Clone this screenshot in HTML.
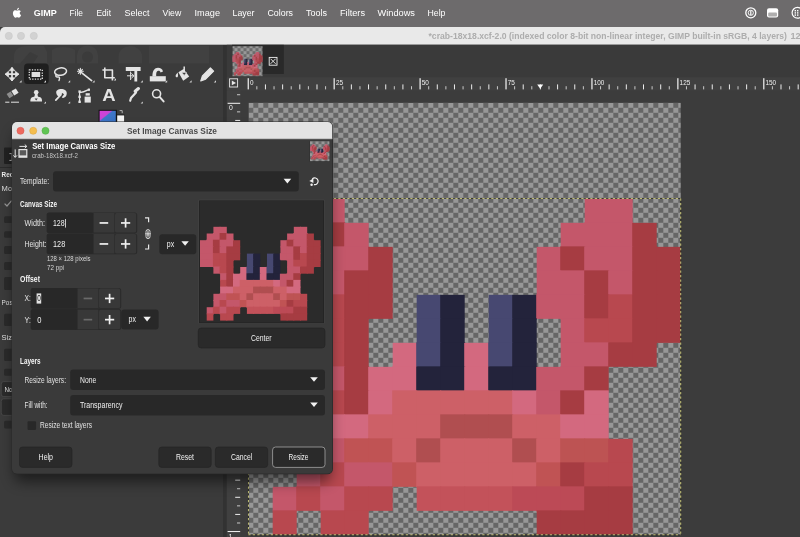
<!DOCTYPE html>
<html lang="en"><head><meta charset="utf-8"><title>GIMP – Set Image Canvas Size</title>
<style>html,body{margin:0;padding:0;background:#3c3c3c;overflow:hidden}svg{display:block;will-change:transform}text{font-family:'Liberation Sans', sans-serif;white-space:pre}</style>
</head><body>
<svg width="800" height="537" viewBox="0 0 800 537" font-family="Liberation Sans, sans-serif">
<defs>
<pattern id="chk" x="248.3" y="102.8" width="10" height="10" patternUnits="userSpaceOnUse">
<rect width="10" height="10" fill="#666666"/><rect width="5" height="5" fill="#979797"/><rect x="5" y="5" width="5" height="5" fill="#979797"/>
</pattern>
<pattern id="chks" x="0.5" y="0.2" width="6" height="6" patternUnits="userSpaceOnUse">
<rect width="6" height="6" fill="#6c6c6c"/><rect width="3" height="3" fill="#989898"/><rect x="3" y="3" width="3" height="3" fill="#989898"/>
</pattern>
<linearGradient id="fg" x1="0" y1="0" x2="1" y2="1"><stop offset="0" stop-color="#d63fdc"/><stop offset="0.36" stop-color="#c845d6"/><stop offset="0.42" stop-color="#3f77c9"/><stop offset="1" stop-color="#356fc2"/></linearGradient>
<filter id="sh" x="-20%" y="-20%" width="140%" height="150%"><feGaussianBlur stdDeviation="7"/></filter>
<clipPath id="dlgclip"><rect x="12" y="122" width="320.5" height="351.8" rx="5"/></clipPath>
</defs>
<rect x="0.00" y="0.00" width="800.00" height="537.00" fill="#3c3c3c"/>
<rect x="0.00" y="44.50" width="226.00" height="492.50" fill="#3b3b3b"/>
<rect x="223.00" y="44.50" width="4.20" height="492.50" fill="#323232"/>
<rect x="0.00" y="0.00" width="800.00" height="27.00" fill="#6d6b6c"/>
<g fill="#ffffff" transform="translate(12,6.4) scale(0.0122)"><path d="M634 546c-1-104 85-154 89-157-49-71-124-81-151-82-64-7-125 38-157 38-33 0-83-37-136-36-70 1-134 41-170 103-73 126-19 312 52 414 35 50 76 106 130 104 52-2 72-34 135-34s81 34 136 33c56-1 92-51 126-101 40-58 56-114 57-117-1-1-110-42-111-165zM531 240c29-35 48-83 43-131-41 2-92 28-121 62-26 30-50 80-43 126 46 4 93-23 121-57z"/></g>
<text x="33.75" y="16.20" font-size="9.2" fill="#ffffff" font-weight="700" textLength="23.00" lengthAdjust="spacingAndGlyphs">GIMP</text>
<text x="69.50" y="16.20" font-size="9.2" fill="#ffffff" textLength="13.50" lengthAdjust="spacingAndGlyphs">File</text>
<text x="96.50" y="16.20" font-size="9.2" fill="#ffffff" textLength="14.50" lengthAdjust="spacingAndGlyphs">Edit</text>
<text x="124.50" y="16.20" font-size="9.2" fill="#ffffff" textLength="25.00" lengthAdjust="spacingAndGlyphs">Select</text>
<text x="162.50" y="16.20" font-size="9.2" fill="#ffffff" textLength="18.75" lengthAdjust="spacingAndGlyphs">View</text>
<text x="194.50" y="16.20" font-size="9.2" fill="#ffffff" textLength="25.50" lengthAdjust="spacingAndGlyphs">Image</text>
<text x="232.50" y="16.20" font-size="9.2" fill="#ffffff" textLength="22.00" lengthAdjust="spacingAndGlyphs">Layer</text>
<text x="267.50" y="16.20" font-size="9.2" fill="#ffffff" textLength="25.50" lengthAdjust="spacingAndGlyphs">Colors</text>
<text x="306.00" y="16.20" font-size="9.2" fill="#ffffff" textLength="21.00" lengthAdjust="spacingAndGlyphs">Tools</text>
<text x="340.00" y="16.20" font-size="9.2" fill="#ffffff" textLength="25.00" lengthAdjust="spacingAndGlyphs">Filters</text>
<text x="377.50" y="16.20" font-size="9.2" fill="#ffffff" textLength="37.50" lengthAdjust="spacingAndGlyphs">Windows</text>
<text x="427.50" y="16.20" font-size="9.2" fill="#ffffff" textLength="18.00" lengthAdjust="spacingAndGlyphs">Help</text>
<g fill="none" stroke="#ffffff" stroke-width="1.3"><circle cx="750.8" cy="12.8" r="5"/><circle cx="750.8" cy="12.8" r="2.6" stroke-width="0.9"/></g>
<rect x="750.20" y="10.60" width="1.20" height="4.40" fill="#ffffff"/>
<rect x="767" y="8.2" width="11.2" height="9.4" rx="2" fill="#ffffff"/><rect x="768.2" y="12.4" width="8.8" height="4" rx="1" fill="#6d6b6c" opacity="0.55"/>
<g fill="none" stroke="#ffffff" stroke-width="1.2"><circle cx="797.5" cy="12.8" r="5.4"/></g>
<g fill="#ffffff"><rect x="794.6" y="10" width="1.4" height="1.4"/><rect x="797" y="10" width="1.4" height="1.4"/><rect x="794.6" y="12.2" width="1.4" height="1.4"/><rect x="797" y="12.2" width="1.4" height="1.4"/><rect x="794.6" y="14.4" width="1.4" height="1.4"/><rect x="797" y="14.4" width="1.4" height="1.4"/></g>
<path d="M0 44.5V32a5 5 0 0 1 5-5H800V44.5Z" fill="#e9e9e9"/>
<rect x="0.00" y="44.20" width="800.00" height="0.60" fill="#c8c8c8"/>
<circle cx="8.8" cy="35.9" r="3.6" fill="#d2d2d2" stroke="#c6c6c6" stroke-width="0.5"/>
<circle cx="21.0" cy="35.9" r="3.6" fill="#d2d2d2" stroke="#c6c6c6" stroke-width="0.5"/>
<circle cx="33.8" cy="35.9" r="3.6" fill="#d2d2d2" stroke="#c6c6c6" stroke-width="0.5"/>
<text x="428.50" y="39.30" font-size="9.2" fill="#adadad" font-weight="700" textLength="358.50" lengthAdjust="spacingAndGlyphs">*crab-18x18.xcf-2.0 (indexed color 8-bit non-linear integer, GIMP built-in sRGB, 4 layers)</text>
<text x="790.50" y="39.30" font-size="9.2" fill="#adadad" font-weight="700">128x128 – GIMP</text>
<g fill="#414141"><path d="M14 63.5V56C14 49 20 46 27 46H44L47 52V63.5Z"/><path d="M52 63.5V50C56 46 70 46 75 50V63.5Z"/><path d="M77 63.5V55A10.5 9.5 0 0 1 98 55V63.5Z"/><path d="M118.6 63.5V56A11.7 10 0 0 1 142 56V63.5Z"/><rect x="149" y="45.8" width="60" height="17.7"/></g>
<ellipse cx="87.5" cy="57" rx="5.5" ry="5.5" fill="#3b3b3b"/><path d="M20 63.5L30 52L38 56L33 63.5Z" fill="#3b3b3b"/>
<rect x="24.10" y="63.60" width="24.60" height="20.30" fill="#1f1f1f" rx="3.5"/>
<g fill="none" stroke="#e4e4e4" stroke-width="1.5" stroke-linecap="round" stroke-linejoin="round">
<path d="M12 68.2V80.2M6 74.2H18" stroke-width="1.7"/>
<path d="M9.4 70.4L12 67.4L14.6 70.4ZM9.4 78L12 81L14.6 78ZM8.2 71.6L5.2 74.2L8.2 76.8ZM15.8 71.6L18.8 74.2L15.8 76.8Z" fill="#e4e4e4" stroke-width="0.8"/>
<rect x="29.3" y="69.8" width="13" height="9.4" stroke-width="1.3" stroke-dasharray="1.3 1.3" stroke-linecap="butt"/>
<ellipse cx="60.6" cy="71.6" rx="6" ry="3.7" transform="rotate(-8 60.6 71.6)" stroke-width="1.5"/>
<path d="M56.6 74.4c-1.6 1.2-.6 3 1.4 2.6c1.6-.3 2 .8 1 3.6" stroke-width="1.4"/>
<path d="M82.4 73.4L91.6 80.6" stroke-width="1.7"/>
<path d="M80.4 68.4V74.2M77.5 71.3H83.3M78.4 69.3L82.4 73.3M82.4 69.3L78.4 73.3" stroke-width="1.1"/>
<path d="M104.8 67.6V77.8H114.8M102.4 70H112.4V80.4" stroke-width="1.6" stroke-linecap="butt"/>
<path d="M200.8 81L202.4 76L210.4 68L213.6 71.2L205.6 79.2Z" fill="#e4e4e4" stroke-width="1.2"/>
<circle cx="156.6" cy="93.8" r="4" stroke-width="1.6"/><path d="M159.6 96.9L163.6 101.4" stroke-width="2"/>
<path d="M130.2 100.8L131 98L136 92.4" stroke-width="2.2"/><path d="M135.2 91.2L138.4 88.6" stroke-width="3.2"/>
<path d="M5.6 102.2H9M11.4 102.2H18.6" stroke-width="1"/>
<path d="M79.6 92V102M79.6 92.6C84 92.2 86.6 90.6 89 89.4" stroke-width="1.2"/>
</g>
<g fill="#e4e4e4">
<rect x="31.60" y="72.00" width="8.60" height="5.00" fill="#e0e0e0"/>
<path d="M11.4 91L15.8 88.6L18.6 92.8L14.2 95.4Z"/><path d="M10.6 91.6L13.4 95.8L9.4 98.2L6.6 94Z" fill="#8d8d8d"/>
<circle cx="36.2" cy="92.2" r="2.3"/><path d="M35 93.6H37.4L38 97H34.4Z"/><path d="M30.4 100.6C30.4 97.4 33 96.6 36.2 96.6S42 97.4 42 100.6V101.6H30.4Z"/>
<path d="M34.6 98.6H37.8L36.2 100.6Z" fill="#3b3b3b"/>
<path d="M56.2 92.6C56 89.4 60 88.4 63.4 89.2C66.6 90 67.6 93 66.2 95.8C65 98 62.4 98.6 61.8 97.2L64 94.4L62.6 93L58.8 96.6C57.4 96 56.4 94.6 56.2 92.6Z"/><path d="M61 94.6L55.8 100.2" stroke="#e4e4e4" stroke-width="1.7" stroke-linecap="round"/>
<rect x="78.40" y="90.40" width="2.40" height="2.40" fill="#e4e4e4"/>
<rect x="78.40" y="95.60" width="2.40" height="2.40" fill="#e4e4e4"/>
<rect x="78.40" y="100.60" width="2.40" height="2.40" fill="#e4e4e4"/>
<rect x="87.80" y="88.60" width="2.20" height="2.20" fill="#e4e4e4"/>
<path d="M84.6 96.6H90.8V102.6H84.6Z"/><path d="M85.6 93.2H89.8V95.6H85.6Z"/>
<path d="M125.8 67H140.6V71H137.2V81.4H134.4V71H125.8Z"/>
<path d="M127 75.8H133.6M131.4 73.4L134 75.8L131.4 78.2M130.6 71.6V80" fill="none" stroke="#e4e4e4" stroke-width="1"/>
<path d="M149.8 76.2H165.8V81.4H149.8Z"/><path d="M152.4 76.4C152.4 70.6 154.6 67.8 158 67.8C160.6 67.8 162.4 69.2 163 71.4L160.6 72.4C160.2 71.2 159.4 70.6 158.2 70.8C156.6 71 156 73 156.2 76.4Z"/>
<path d="M178.4 72.2L183.6 69L189.2 76.4L183.2 80.8Z"/><path d="M177.6 72.6L175.8 75C175.2 76.6 176.4 77.8 177.4 77.2C178.2 76.6 178.2 74.6 177.6 72.6Z"/>
<path d="M184.2 66.6V73.4" fill="none" stroke="#e4e4e4" stroke-width="1.5"/><path d="M181.8 72.4L184.2 75.4L186.6 72.4Z" fill="#3b3b3b" stroke="#e4e4e4" stroke-width="0.6"/>
<path d="M21.6 80.2V82.4H19.400000000000002Z" fill="#d8d8d8"/>
<path d="M46 80.2V82.4H43.8Z" fill="#d8d8d8"/>
<path d="M70.2 80.2V82.4H68.0Z" fill="#d8d8d8"/>
<path d="M94.6 80.2V82.4H92.39999999999999Z" fill="#d8d8d8"/>
<path d="M116 78.2V80.4H113.8Z" fill="#d8d8d8"/>
<path d="M142.8 80.2V82.4H140.60000000000002Z" fill="#d8d8d8"/>
<path d="M167.2 80.2V82.4H165.0Z" fill="#d8d8d8"/>
<path d="M191.6 80.2V82.4H189.4Z" fill="#d8d8d8"/>
<path d="M216 80.2V82.4H213.8Z" fill="#d8d8d8"/>
<path d="M46 101.39999999999999V103.6H43.8Z" fill="#d8d8d8"/>
<path d="M70.2 101.39999999999999V103.6H68.0Z" fill="#d8d8d8"/>
<path d="M142.8 101.39999999999999V103.6H140.60000000000002Z" fill="#d8d8d8"/>
</g>
<text x="102.20" y="101.00" font-size="17.2" fill="#e4e4e4" font-weight="700" textLength="13.40" lengthAdjust="spacingAndGlyphs">A</text>
<rect x="116.40" y="114.60" width="8.40" height="9.00" fill="#1a1a1a"/>
<rect x="117.20" y="115.40" width="7.00" height="8.00" fill="#f4f4f4"/>
<rect x="98.60" y="109.80" width="18.20" height="14.00" fill="#101010"/>
<rect x="99.60" y="110.80" width="16.20" height="13.00" fill="url(#fg)"/>
<path d="M119.6 110.6H122.2V113.2" fill="none" stroke="#cfcfcf" stroke-width="0.8"/>
<rect x="4.00" y="147.50" width="9.00" height="16.50" fill="#222222" rx="1"/>
<path d="M9.4 153.6H12V160.4H9.4" fill="none" stroke="#d8d8d8" stroke-width="0.8"/>
<rect x="0.00" y="167.00" width="14.00" height="0.80" fill="#2a2a2a"/>
<text x="1.60" y="177.00" font-size="7.6" fill="#f2f2f2" font-weight="700" textLength="51.00" lengthAdjust="spacingAndGlyphs">Rectangle Select</text>
<text x="1.60" y="190.80" font-size="7.6" fill="#e0e0e0" textLength="21.00" lengthAdjust="spacingAndGlyphs">Mode:</text>
<path d="M4.6 203.6L7 206L11.6 200.6" fill="none" stroke="#9a9a9a" stroke-width="1.2"/>
<rect x="4.00" y="216.25" width="9.00" height="6.75" fill="#2b2b2b" rx="1.5"/>
<rect x="4.00" y="231.25" width="9.00" height="6.50" fill="#2b2b2b" rx="1.5"/>
<rect x="4.00" y="246.00" width="9.00" height="8.00" fill="#2b2b2b" rx="1.5"/>
<rect x="4.00" y="262.00" width="9.00" height="8.00" fill="#2b2b2b" rx="1.5"/>
<rect x="4.00" y="277.00" width="9.00" height="13.00" fill="#2b2b2b" rx="1.5"/>
<rect x="4.00" y="313.75" width="9.00" height="12.25" fill="#2b2b2b" rx="1.5"/>
<rect x="4.00" y="348.75" width="9.00" height="12.25" fill="#2b2b2b" rx="1.5"/>
<rect x="4.00" y="368.75" width="9.00" height="7.00" fill="#2b2b2b" rx="1.5"/>
<rect x="4.00" y="420.70" width="9.00" height="7.70" fill="#2b2b2b" rx="1.5"/>
<text x="1.60" y="305.00" font-size="7.6" fill="#e0e0e0" textLength="24.50" lengthAdjust="spacingAndGlyphs">Position:</text>
<text x="1.60" y="340.00" font-size="7.6" fill="#e0e0e0" textLength="16.90" lengthAdjust="spacingAndGlyphs">Size:</text>
<rect x="1.20" y="381.60" width="14.00" height="15.00" fill="#2b2b2b" rx="2.5" stroke="#4c4c4c" stroke-width="0.8"/>
<text x="4.40" y="392.00" font-size="7.6" fill="#e6e6e6" textLength="15.00" lengthAdjust="spacingAndGlyphs">None</text>
<rect x="1.20" y="398.80" width="14.00" height="16.60" fill="#2b2b2b" rx="2.5" stroke="#4c4c4c" stroke-width="0.8"/>
<rect x="226.80" y="44.80" width="573.20" height="32.40" fill="#3a3a3a"/>
<rect x="232.00" y="44.80" width="51.80" height="29.20" fill="#292929"/>
<rect x="232.50" y="46.20" width="30.00" height="30.00" fill="url(#chks)"/>
<g opacity="0.93">
<rect x="235.83" y="52.10" width="1.97" height="1.97" fill="#c4576a"/>
<rect x="237.20" y="52.10" width="1.97" height="1.97" fill="#c4576a"/>
<rect x="255.84" y="52.10" width="1.97" height="1.97" fill="#c4576a"/>
<rect x="257.20" y="52.10" width="1.97" height="1.97" fill="#c4576a"/>
<rect x="234.17" y="53.77" width="1.97" height="1.97" fill="#c4576a"/>
<rect x="235.53" y="53.47" width="2.27" height="2.27" fill="#c4576a"/>
<rect x="237.20" y="53.47" width="2.27" height="2.27" fill="#a63c42"/>
<rect x="238.87" y="53.77" width="1.97" height="1.97" fill="#c4576a"/>
<rect x="254.17" y="53.77" width="1.97" height="1.97" fill="#c4576a"/>
<rect x="255.54" y="53.47" width="2.27" height="2.27" fill="#c4576a"/>
<rect x="257.20" y="53.47" width="2.27" height="2.27" fill="#c4576a"/>
<rect x="258.87" y="53.77" width="1.97" height="1.97" fill="#a63c42"/>
<rect x="232.50" y="55.43" width="1.97" height="1.97" fill="#c4576a"/>
<rect x="233.87" y="55.13" width="2.27" height="2.27" fill="#c4576a"/>
<rect x="235.53" y="55.13" width="2.27" height="2.27" fill="#a63c42"/>
<rect x="237.20" y="55.13" width="2.27" height="2.27" fill="#c4576a"/>
<rect x="238.87" y="55.13" width="2.27" height="2.27" fill="#c4576a"/>
<rect x="240.53" y="55.43" width="1.97" height="1.97" fill="#a63c42"/>
<rect x="252.50" y="55.43" width="1.97" height="1.97" fill="#c4576a"/>
<rect x="253.87" y="55.13" width="2.27" height="2.27" fill="#a63c42"/>
<rect x="255.54" y="55.13" width="2.27" height="2.27" fill="#c4576a"/>
<rect x="257.20" y="55.13" width="2.27" height="2.27" fill="#c4576a"/>
<rect x="258.87" y="55.13" width="2.27" height="2.27" fill="#a63c42"/>
<rect x="260.54" y="55.43" width="1.97" height="1.97" fill="#a63c42"/>
<rect x="232.50" y="56.80" width="1.97" height="2.27" fill="#c4576a"/>
<rect x="233.87" y="56.80" width="2.27" height="2.27" fill="#c4576a"/>
<rect x="235.53" y="56.80" width="2.27" height="2.27" fill="#a63c42"/>
<rect x="237.20" y="56.80" width="2.27" height="2.27" fill="#c4576a"/>
<rect x="238.87" y="56.80" width="2.27" height="2.27" fill="#a63c42"/>
<rect x="240.53" y="56.80" width="1.97" height="2.27" fill="#a63c42"/>
<rect x="252.50" y="56.80" width="1.97" height="2.27" fill="#c4576a"/>
<rect x="253.87" y="56.80" width="2.27" height="2.27" fill="#c4576a"/>
<rect x="255.54" y="56.80" width="2.27" height="2.27" fill="#a63c42"/>
<rect x="257.20" y="56.80" width="2.27" height="2.27" fill="#c4576a"/>
<rect x="258.87" y="56.80" width="2.27" height="2.27" fill="#a63c42"/>
<rect x="260.54" y="56.80" width="1.97" height="2.27" fill="#a63c42"/>
<rect x="232.50" y="58.47" width="1.97" height="2.27" fill="#c4576a"/>
<rect x="233.87" y="58.47" width="2.27" height="2.27" fill="#c4576a"/>
<rect x="235.53" y="58.47" width="2.27" height="2.27" fill="#b8484f"/>
<rect x="237.20" y="58.47" width="2.27" height="2.27" fill="#b8484f"/>
<rect x="238.87" y="58.47" width="2.27" height="2.27" fill="#a63c42"/>
<rect x="240.53" y="58.47" width="1.97" height="1.97" fill="#a63c42"/>
<rect x="244.17" y="58.77" width="1.97" height="1.97" fill="#474871"/>
<rect x="245.54" y="58.77" width="1.97" height="1.97" fill="#23233b"/>
<rect x="249.17" y="58.77" width="1.97" height="1.97" fill="#474871"/>
<rect x="250.54" y="58.77" width="2.27" height="1.97" fill="#23233b"/>
<rect x="252.20" y="58.47" width="2.27" height="1.97" fill="#c4576a"/>
<rect x="253.87" y="58.47" width="2.27" height="2.27" fill="#c4576a"/>
<rect x="255.54" y="58.47" width="2.27" height="2.27" fill="#a63c42"/>
<rect x="257.20" y="58.47" width="2.27" height="2.27" fill="#b8484f"/>
<rect x="258.87" y="58.47" width="2.27" height="2.27" fill="#a63c42"/>
<rect x="260.54" y="58.47" width="1.97" height="2.27" fill="#a63c42"/>
<rect x="232.50" y="60.14" width="1.97" height="1.97" fill="#c4576a"/>
<rect x="233.87" y="60.14" width="2.27" height="1.97" fill="#c4576a"/>
<rect x="235.53" y="60.14" width="2.27" height="2.27" fill="#b8484f"/>
<rect x="237.20" y="60.14" width="2.27" height="2.27" fill="#b8484f"/>
<rect x="238.87" y="60.14" width="1.97" height="2.27" fill="#a63c42"/>
<rect x="244.17" y="60.14" width="1.97" height="2.27" fill="#474871"/>
<rect x="245.54" y="60.14" width="1.97" height="2.27" fill="#23233b"/>
<rect x="249.17" y="60.14" width="1.97" height="2.27" fill="#474871"/>
<rect x="250.54" y="60.14" width="1.97" height="2.27" fill="#23233b"/>
<rect x="254.17" y="60.14" width="1.97" height="2.27" fill="#c4576a"/>
<rect x="255.54" y="60.14" width="2.27" height="2.27" fill="#b8484f"/>
<rect x="257.20" y="60.14" width="2.27" height="2.27" fill="#b8484f"/>
<rect x="258.87" y="60.14" width="2.27" height="2.27" fill="#a63c42"/>
<rect x="260.54" y="60.14" width="1.97" height="1.97" fill="#a63c42"/>
<rect x="235.83" y="61.80" width="1.97" height="1.97" fill="#c4576a"/>
<rect x="237.20" y="61.80" width="2.27" height="2.27" fill="#b8484f"/>
<rect x="238.87" y="61.80" width="1.97" height="2.27" fill="#a63c42"/>
<rect x="242.50" y="62.10" width="1.97" height="1.97" fill="#d3697f"/>
<rect x="243.87" y="61.80" width="2.27" height="2.27" fill="#474871"/>
<rect x="245.54" y="61.80" width="2.27" height="2.27" fill="#23233b"/>
<rect x="247.20" y="62.10" width="2.27" height="1.97" fill="#d3697f"/>
<rect x="248.87" y="61.80" width="2.27" height="2.27" fill="#474871"/>
<rect x="250.54" y="61.80" width="1.97" height="2.27" fill="#23233b"/>
<rect x="254.17" y="61.80" width="1.97" height="2.27" fill="#c4576a"/>
<rect x="255.54" y="61.80" width="2.27" height="2.27" fill="#c4576a"/>
<rect x="257.20" y="61.80" width="2.27" height="1.97" fill="#a63c42"/>
<rect x="258.87" y="61.80" width="1.97" height="1.97" fill="#a63c42"/>
<rect x="237.50" y="63.47" width="1.97" height="2.27" fill="#c4576a"/>
<rect x="238.87" y="63.47" width="2.27" height="2.27" fill="#a63c42"/>
<rect x="240.53" y="63.77" width="2.27" height="1.97" fill="#d3697f"/>
<rect x="242.20" y="63.47" width="2.27" height="2.27" fill="#d3697f"/>
<rect x="243.87" y="63.47" width="2.27" height="2.27" fill="#23233b"/>
<rect x="245.54" y="63.47" width="2.27" height="2.27" fill="#23233b"/>
<rect x="247.20" y="63.47" width="2.27" height="2.27" fill="#d3697f"/>
<rect x="248.87" y="63.47" width="2.27" height="2.27" fill="#23233b"/>
<rect x="250.54" y="63.47" width="2.27" height="2.27" fill="#23233b"/>
<rect x="252.20" y="63.77" width="2.27" height="1.97" fill="#c4576a"/>
<rect x="253.87" y="63.47" width="2.27" height="2.27" fill="#c4576a"/>
<rect x="255.54" y="63.47" width="1.97" height="2.27" fill="#a63c42"/>
<rect x="237.50" y="65.14" width="1.97" height="2.27" fill="#b8484f"/>
<rect x="238.87" y="65.14" width="2.27" height="2.27" fill="#a63c42"/>
<rect x="240.53" y="65.14" width="2.27" height="2.27" fill="#d3697f"/>
<rect x="242.20" y="65.14" width="2.27" height="2.27" fill="#cd6067"/>
<rect x="243.87" y="65.14" width="2.27" height="2.27" fill="#cd6067"/>
<rect x="245.54" y="65.14" width="2.27" height="2.27" fill="#cd6067"/>
<rect x="247.20" y="65.14" width="2.27" height="2.27" fill="#cd6067"/>
<rect x="248.87" y="65.14" width="2.27" height="2.27" fill="#cd6067"/>
<rect x="250.54" y="65.14" width="2.27" height="2.27" fill="#d3697f"/>
<rect x="252.20" y="65.14" width="2.27" height="2.27" fill="#c4576a"/>
<rect x="253.87" y="65.14" width="2.27" height="2.27" fill="#a63c42"/>
<rect x="255.54" y="65.14" width="1.97" height="2.27" fill="#d3697f"/>
<rect x="237.50" y="66.80" width="1.97" height="2.27" fill="#d3697f"/>
<rect x="238.87" y="66.80" width="2.27" height="2.27" fill="#d3697f"/>
<rect x="240.53" y="66.80" width="2.27" height="2.27" fill="#cd6067"/>
<rect x="242.20" y="66.80" width="2.27" height="2.27" fill="#cd6067"/>
<rect x="243.87" y="66.80" width="2.27" height="2.27" fill="#cd6067"/>
<rect x="245.54" y="66.80" width="2.27" height="2.27" fill="#b04e50"/>
<rect x="247.20" y="66.80" width="2.27" height="2.27" fill="#b04e50"/>
<rect x="248.87" y="66.80" width="2.27" height="2.27" fill="#b04e50"/>
<rect x="250.54" y="66.80" width="2.27" height="2.27" fill="#cd6067"/>
<rect x="252.20" y="66.80" width="2.27" height="2.27" fill="#cd6067"/>
<rect x="253.87" y="66.80" width="2.27" height="2.27" fill="#d3697f"/>
<rect x="255.54" y="66.80" width="1.97" height="2.27" fill="#d3697f"/>
<rect x="235.83" y="68.77" width="1.97" height="1.97" fill="#c4576a"/>
<rect x="237.20" y="68.47" width="2.27" height="2.27" fill="#c4576a"/>
<rect x="238.87" y="68.47" width="2.27" height="2.27" fill="#c05354"/>
<rect x="240.53" y="68.47" width="2.27" height="2.27" fill="#c05354"/>
<rect x="242.20" y="68.47" width="2.27" height="2.27" fill="#cd6067"/>
<rect x="243.87" y="68.47" width="2.27" height="2.27" fill="#b04e50"/>
<rect x="245.54" y="68.47" width="2.27" height="2.27" fill="#cd6067"/>
<rect x="247.20" y="68.47" width="2.27" height="2.27" fill="#cd6067"/>
<rect x="248.87" y="68.47" width="2.27" height="2.27" fill="#cd6067"/>
<rect x="250.54" y="68.47" width="2.27" height="2.27" fill="#b04e50"/>
<rect x="252.20" y="68.47" width="2.27" height="2.27" fill="#cd6067"/>
<rect x="253.87" y="68.47" width="2.27" height="2.27" fill="#bd5353"/>
<rect x="255.54" y="68.47" width="2.27" height="2.27" fill="#bd5353"/>
<rect x="257.20" y="68.77" width="1.97" height="1.97" fill="#b8484f"/>
<rect x="235.83" y="70.14" width="1.97" height="2.27" fill="#c4576a"/>
<rect x="237.20" y="70.14" width="2.27" height="2.27" fill="#b8484f"/>
<rect x="238.87" y="70.14" width="2.27" height="2.27" fill="#c4576a"/>
<rect x="240.53" y="70.14" width="2.27" height="2.27" fill="#c4576a"/>
<rect x="242.20" y="70.14" width="2.27" height="1.97" fill="#c05354"/>
<rect x="243.87" y="70.14" width="2.27" height="2.27" fill="#cd6067"/>
<rect x="245.54" y="70.14" width="2.27" height="2.27" fill="#cd6067"/>
<rect x="247.20" y="70.14" width="2.27" height="2.27" fill="#cd6067"/>
<rect x="248.87" y="70.14" width="2.27" height="2.27" fill="#cd6067"/>
<rect x="250.54" y="70.14" width="2.27" height="2.27" fill="#cd6067"/>
<rect x="252.20" y="70.14" width="2.27" height="2.27" fill="#c05354"/>
<rect x="253.87" y="70.14" width="2.27" height="2.27" fill="#a63c42"/>
<rect x="255.54" y="70.14" width="2.27" height="2.27" fill="#b8484f"/>
<rect x="257.20" y="70.14" width="1.97" height="2.27" fill="#b8484f"/>
<rect x="234.17" y="72.10" width="1.97" height="1.97" fill="#c4576a"/>
<rect x="235.53" y="71.80" width="2.27" height="1.97" fill="#b8484f"/>
<rect x="237.20" y="71.80" width="2.27" height="2.27" fill="#c4576a"/>
<rect x="238.87" y="71.80" width="2.27" height="2.27" fill="#b8484f"/>
<rect x="240.53" y="71.80" width="1.97" height="1.97" fill="#b8484f"/>
<rect x="244.17" y="71.80" width="1.97" height="1.97" fill="#c3525a"/>
<rect x="245.54" y="71.80" width="2.27" height="1.97" fill="#c3525a"/>
<rect x="247.20" y="71.80" width="2.27" height="1.97" fill="#c3525a"/>
<rect x="248.87" y="71.80" width="2.27" height="1.97" fill="#c3525a"/>
<rect x="250.54" y="71.80" width="2.27" height="1.97" fill="#bc4a56"/>
<rect x="252.20" y="71.80" width="2.27" height="2.27" fill="#bc4a56"/>
<rect x="253.87" y="71.80" width="2.27" height="2.27" fill="#bc4a56"/>
<rect x="255.54" y="71.80" width="2.27" height="2.27" fill="#a63c42"/>
<rect x="257.20" y="71.80" width="1.97" height="2.27" fill="#a63c42"/>
<rect x="234.17" y="73.47" width="1.67" height="1.97" fill="#b8484f"/>
<rect x="237.50" y="73.47" width="1.97" height="1.97" fill="#b8484f"/>
<rect x="238.87" y="73.47" width="1.97" height="1.97" fill="#b8484f"/>
<rect x="252.50" y="73.47" width="1.97" height="1.97" fill="#a63c42"/>
<rect x="253.87" y="73.47" width="2.27" height="1.97" fill="#a63c42"/>
<rect x="255.54" y="73.47" width="2.27" height="1.97" fill="#a63c42"/>
<rect x="257.20" y="73.47" width="1.97" height="1.97" fill="#a63c42"/>
</g>
<g fill="none" stroke="#f0f0f0" stroke-width="0.9"><rect x="269.2" y="57.4" width="7.8" height="7.8"/><path d="M270.6 58.8L275.6 63.8M275.6 58.8L270.6 63.8"/></g>
<rect x="226.80" y="77.20" width="573.20" height="13.00" fill="#404040"/>
<rect x="226.80" y="90.20" width="13.80" height="446.80" fill="#404040"/>
<rect x="229.6" y="78.8" width="8" height="8.2" fill="none" stroke="#e8e8e8" stroke-width="0.9"/><path d="M231.8 80.6L236 82.9L231.8 85.2Z" fill="#e8e8e8"/>
<g fill="#f0f0f0">
<rect x="247.65" y="78.20" width="1.20" height="11.20" fill="#f4f4f4"/>
<rect x="256.34" y="86.20" width="1.00" height="3.20" fill="#c8c8c8"/>
<rect x="264.94" y="84.40" width="1.00" height="5.00" fill="#ececec"/>
<rect x="273.53" y="86.20" width="1.00" height="3.20" fill="#c8c8c8"/>
<rect x="282.12" y="84.40" width="1.00" height="5.00" fill="#ececec"/>
<rect x="290.71" y="86.20" width="1.00" height="3.20" fill="#c8c8c8"/>
<rect x="299.31" y="84.40" width="1.00" height="5.00" fill="#ececec"/>
<rect x="307.90" y="86.20" width="1.00" height="3.20" fill="#c8c8c8"/>
<rect x="316.49" y="84.40" width="1.00" height="5.00" fill="#ececec"/>
<rect x="325.08" y="86.20" width="1.00" height="3.20" fill="#c8c8c8"/>
<rect x="333.57" y="78.20" width="1.20" height="11.20" fill="#f4f4f4"/>
<rect x="342.27" y="86.20" width="1.00" height="3.20" fill="#c8c8c8"/>
<rect x="350.86" y="84.40" width="1.00" height="5.00" fill="#ececec"/>
<rect x="359.45" y="86.20" width="1.00" height="3.20" fill="#c8c8c8"/>
<rect x="368.04" y="84.40" width="1.00" height="5.00" fill="#ececec"/>
<rect x="376.64" y="86.20" width="1.00" height="3.20" fill="#c8c8c8"/>
<rect x="385.23" y="84.40" width="1.00" height="5.00" fill="#ececec"/>
<rect x="393.82" y="86.20" width="1.00" height="3.20" fill="#c8c8c8"/>
<rect x="402.41" y="84.40" width="1.00" height="5.00" fill="#ececec"/>
<rect x="411.01" y="86.20" width="1.00" height="3.20" fill="#c8c8c8"/>
<rect x="419.50" y="78.20" width="1.20" height="11.20" fill="#f4f4f4"/>
<rect x="428.19" y="86.20" width="1.00" height="3.20" fill="#c8c8c8"/>
<rect x="436.78" y="84.40" width="1.00" height="5.00" fill="#ececec"/>
<rect x="445.38" y="86.20" width="1.00" height="3.20" fill="#c8c8c8"/>
<rect x="453.97" y="84.40" width="1.00" height="5.00" fill="#ececec"/>
<rect x="462.56" y="86.20" width="1.00" height="3.20" fill="#c8c8c8"/>
<rect x="471.15" y="84.40" width="1.00" height="5.00" fill="#ececec"/>
<rect x="479.75" y="86.20" width="1.00" height="3.20" fill="#c8c8c8"/>
<rect x="488.34" y="84.40" width="1.00" height="5.00" fill="#ececec"/>
<rect x="496.93" y="86.20" width="1.00" height="3.20" fill="#c8c8c8"/>
<rect x="505.42" y="78.20" width="1.20" height="11.20" fill="#f4f4f4"/>
<rect x="514.12" y="86.20" width="1.00" height="3.20" fill="#c8c8c8"/>
<rect x="522.71" y="84.40" width="1.00" height="5.00" fill="#ececec"/>
<rect x="531.30" y="86.20" width="1.00" height="3.20" fill="#c8c8c8"/>
<rect x="539.89" y="84.40" width="1.00" height="5.00" fill="#ececec"/>
<rect x="548.49" y="86.20" width="1.00" height="3.20" fill="#c8c8c8"/>
<rect x="557.08" y="84.40" width="1.00" height="5.00" fill="#ececec"/>
<rect x="565.67" y="86.20" width="1.00" height="3.20" fill="#c8c8c8"/>
<rect x="574.26" y="84.40" width="1.00" height="5.00" fill="#ececec"/>
<rect x="582.86" y="86.20" width="1.00" height="3.20" fill="#c8c8c8"/>
<rect x="591.35" y="78.20" width="1.20" height="11.20" fill="#f4f4f4"/>
<rect x="600.04" y="86.20" width="1.00" height="3.20" fill="#c8c8c8"/>
<rect x="608.63" y="84.40" width="1.00" height="5.00" fill="#ececec"/>
<rect x="617.23" y="86.20" width="1.00" height="3.20" fill="#c8c8c8"/>
<rect x="625.82" y="84.40" width="1.00" height="5.00" fill="#ececec"/>
<rect x="634.41" y="86.20" width="1.00" height="3.20" fill="#c8c8c8"/>
<rect x="643.00" y="84.40" width="1.00" height="5.00" fill="#ececec"/>
<rect x="651.60" y="86.20" width="1.00" height="3.20" fill="#c8c8c8"/>
<rect x="660.19" y="84.40" width="1.00" height="5.00" fill="#ececec"/>
<rect x="668.78" y="86.20" width="1.00" height="3.20" fill="#c8c8c8"/>
<rect x="677.27" y="78.20" width="1.20" height="11.20" fill="#f4f4f4"/>
<rect x="685.97" y="86.20" width="1.00" height="3.20" fill="#c8c8c8"/>
<rect x="694.56" y="84.40" width="1.00" height="5.00" fill="#ececec"/>
<rect x="703.15" y="86.20" width="1.00" height="3.20" fill="#c8c8c8"/>
<rect x="711.74" y="84.40" width="1.00" height="5.00" fill="#ececec"/>
<rect x="720.34" y="86.20" width="1.00" height="3.20" fill="#c8c8c8"/>
<rect x="728.93" y="84.40" width="1.00" height="5.00" fill="#ececec"/>
<rect x="737.52" y="86.20" width="1.00" height="3.20" fill="#c8c8c8"/>
<rect x="746.12" y="84.40" width="1.00" height="5.00" fill="#ececec"/>
<rect x="754.71" y="86.20" width="1.00" height="3.20" fill="#c8c8c8"/>
<rect x="763.20" y="78.20" width="1.20" height="11.20" fill="#f4f4f4"/>
<rect x="771.89" y="86.20" width="1.00" height="3.20" fill="#c8c8c8"/>
<rect x="780.49" y="84.40" width="1.00" height="5.00" fill="#ececec"/>
<rect x="789.08" y="86.20" width="1.00" height="3.20" fill="#c8c8c8"/>
<rect x="797.67" y="84.40" width="1.00" height="5.00" fill="#ececec"/>
</g>
<text x="249.95" y="85.00" font-size="7.8" fill="#f0f0f0" textLength="3.55" lengthAdjust="spacingAndGlyphs">0</text>
<text x="335.88" y="85.00" font-size="7.8" fill="#f0f0f0" textLength="7.10" lengthAdjust="spacingAndGlyphs">25</text>
<text x="421.80" y="85.00" font-size="7.8" fill="#f0f0f0" textLength="7.10" lengthAdjust="spacingAndGlyphs">50</text>
<text x="507.72" y="85.00" font-size="7.8" fill="#f0f0f0" textLength="7.10" lengthAdjust="spacingAndGlyphs">75</text>
<text x="593.65" y="85.00" font-size="7.8" fill="#f0f0f0" textLength="10.65" lengthAdjust="spacingAndGlyphs">100</text>
<text x="679.58" y="85.00" font-size="7.8" fill="#f0f0f0" textLength="10.65" lengthAdjust="spacingAndGlyphs">125</text>
<text x="765.50" y="85.00" font-size="7.8" fill="#f0f0f0" textLength="10.65" lengthAdjust="spacingAndGlyphs">150</text>
<path d="M537.2 84.6H543.2L540.2 88.8Z" fill="#ffffff"/>
<rect x="237.00" y="94.23" width="3.20" height="1.00" fill="#c8c8c8"/>
<rect x="227.60" y="102.80" width="12.60" height="1.00" fill="#f4f4f4"/>
<rect x="237.00" y="111.36" width="3.20" height="1.00" fill="#c8c8c8"/>
<rect x="235.20" y="119.93" width="5.00" height="1.00" fill="#ececec"/>
<rect x="237.00" y="128.50" width="3.20" height="1.00" fill="#c8c8c8"/>
<rect x="235.20" y="137.06" width="5.00" height="1.00" fill="#ececec"/>
<rect x="237.00" y="145.62" width="3.20" height="1.00" fill="#c8c8c8"/>
<rect x="235.20" y="154.19" width="5.00" height="1.00" fill="#ececec"/>
<rect x="237.00" y="162.75" width="3.20" height="1.00" fill="#c8c8c8"/>
<rect x="235.20" y="171.32" width="5.00" height="1.00" fill="#ececec"/>
<rect x="237.00" y="179.88" width="3.20" height="1.00" fill="#c8c8c8"/>
<rect x="227.60" y="188.45" width="12.60" height="1.00" fill="#f4f4f4"/>
<rect x="237.00" y="197.02" width="3.20" height="1.00" fill="#c8c8c8"/>
<rect x="235.20" y="205.58" width="5.00" height="1.00" fill="#ececec"/>
<rect x="237.00" y="214.15" width="3.20" height="1.00" fill="#c8c8c8"/>
<rect x="235.20" y="222.71" width="5.00" height="1.00" fill="#ececec"/>
<rect x="237.00" y="231.28" width="3.20" height="1.00" fill="#c8c8c8"/>
<rect x="235.20" y="239.84" width="5.00" height="1.00" fill="#ececec"/>
<rect x="237.00" y="248.41" width="3.20" height="1.00" fill="#c8c8c8"/>
<rect x="235.20" y="256.97" width="5.00" height="1.00" fill="#ececec"/>
<rect x="237.00" y="265.54" width="3.20" height="1.00" fill="#c8c8c8"/>
<rect x="227.60" y="274.10" width="12.60" height="1.00" fill="#f4f4f4"/>
<rect x="237.00" y="282.67" width="3.20" height="1.00" fill="#c8c8c8"/>
<rect x="235.20" y="291.23" width="5.00" height="1.00" fill="#ececec"/>
<rect x="237.00" y="299.80" width="3.20" height="1.00" fill="#c8c8c8"/>
<rect x="235.20" y="308.36" width="5.00" height="1.00" fill="#ececec"/>
<rect x="237.00" y="316.93" width="3.20" height="1.00" fill="#c8c8c8"/>
<rect x="235.20" y="325.49" width="5.00" height="1.00" fill="#ececec"/>
<rect x="237.00" y="334.06" width="3.20" height="1.00" fill="#c8c8c8"/>
<rect x="235.20" y="342.62" width="5.00" height="1.00" fill="#ececec"/>
<rect x="237.00" y="351.19" width="3.20" height="1.00" fill="#c8c8c8"/>
<rect x="227.60" y="359.75" width="12.60" height="1.00" fill="#f4f4f4"/>
<rect x="237.00" y="368.32" width="3.20" height="1.00" fill="#c8c8c8"/>
<rect x="235.20" y="376.88" width="5.00" height="1.00" fill="#ececec"/>
<rect x="237.00" y="385.45" width="3.20" height="1.00" fill="#c8c8c8"/>
<rect x="235.20" y="394.01" width="5.00" height="1.00" fill="#ececec"/>
<rect x="237.00" y="402.58" width="3.20" height="1.00" fill="#c8c8c8"/>
<rect x="235.20" y="411.14" width="5.00" height="1.00" fill="#ececec"/>
<rect x="237.00" y="419.71" width="3.20" height="1.00" fill="#c8c8c8"/>
<rect x="235.20" y="428.27" width="5.00" height="1.00" fill="#ececec"/>
<rect x="237.00" y="436.84" width="3.20" height="1.00" fill="#c8c8c8"/>
<rect x="227.60" y="445.40" width="12.60" height="1.00" fill="#f4f4f4"/>
<rect x="237.00" y="453.97" width="3.20" height="1.00" fill="#c8c8c8"/>
<rect x="235.20" y="462.53" width="5.00" height="1.00" fill="#ececec"/>
<rect x="237.00" y="471.10" width="3.20" height="1.00" fill="#c8c8c8"/>
<rect x="235.20" y="479.66" width="5.00" height="1.00" fill="#ececec"/>
<rect x="237.00" y="488.23" width="3.20" height="1.00" fill="#c8c8c8"/>
<rect x="235.20" y="496.79" width="5.00" height="1.00" fill="#ececec"/>
<rect x="237.00" y="505.36" width="3.20" height="1.00" fill="#c8c8c8"/>
<rect x="235.20" y="513.92" width="5.00" height="1.00" fill="#ececec"/>
<rect x="237.00" y="522.49" width="3.20" height="1.00" fill="#c8c8c8"/>
<rect x="227.60" y="531.05" width="12.60" height="1.00" fill="#f4f4f4"/>
<text x="228.90" y="109.80" font-size="6.8" fill="#f0f0f0" textLength="3.80" lengthAdjust="spacingAndGlyphs">0</text>
<text x="229.60" y="196.30" font-size="6.6" fill="#f0f0f0" textLength="3.60" lengthAdjust="spacingAndGlyphs">2</text>
<text x="229.60" y="202.40" font-size="6.6" fill="#f0f0f0" textLength="3.60" lengthAdjust="spacingAndGlyphs">5</text>
<text x="229.60" y="282.20" font-size="6.6" fill="#f0f0f0" textLength="3.60" lengthAdjust="spacingAndGlyphs">5</text>
<text x="229.60" y="288.30" font-size="6.6" fill="#f0f0f0" textLength="3.60" lengthAdjust="spacingAndGlyphs">0</text>
<text x="229.60" y="368.10" font-size="6.6" fill="#f0f0f0" textLength="3.60" lengthAdjust="spacingAndGlyphs">7</text>
<text x="229.60" y="374.20" font-size="6.6" fill="#f0f0f0" textLength="3.60" lengthAdjust="spacingAndGlyphs">5</text>
<text x="229.60" y="454.00" font-size="6.6" fill="#f0f0f0" textLength="3.60" lengthAdjust="spacingAndGlyphs">1</text>
<text x="229.60" y="460.10" font-size="6.6" fill="#f0f0f0" textLength="3.60" lengthAdjust="spacingAndGlyphs">0</text>
<text x="229.60" y="466.20" font-size="6.6" fill="#f0f0f0" textLength="3.60" lengthAdjust="spacingAndGlyphs">0</text>
<text x="228.80" y="538.80" font-size="6.8" fill="#f0f0f0" textLength="3.60" lengthAdjust="spacingAndGlyphs">1</text>
<rect x="248.70" y="102.85" width="432.00" height="432.00" fill="url(#chk)"/>
<rect x="296.70" y="198.85" width="24.50" height="24.50" fill="#c4576a"/>
<rect x="320.20" y="198.85" width="24.50" height="24.50" fill="#c4576a"/>
<rect x="584.70" y="198.85" width="24.50" height="24.50" fill="#c4576a"/>
<rect x="608.20" y="198.85" width="24.50" height="24.50" fill="#c4576a"/>
<rect x="272.70" y="222.85" width="24.50" height="24.50" fill="#c4576a"/>
<rect x="296.20" y="222.35" width="25.00" height="25.00" fill="#c4576a"/>
<rect x="320.20" y="222.35" width="25.00" height="25.00" fill="#a63c42"/>
<rect x="344.20" y="222.85" width="24.50" height="24.50" fill="#c4576a"/>
<rect x="560.70" y="222.85" width="24.50" height="24.50" fill="#c4576a"/>
<rect x="584.20" y="222.35" width="25.00" height="25.00" fill="#c4576a"/>
<rect x="608.20" y="222.35" width="25.00" height="25.00" fill="#c4576a"/>
<rect x="632.20" y="222.85" width="24.50" height="24.50" fill="#a63c42"/>
<rect x="248.70" y="246.85" width="24.50" height="24.50" fill="#c4576a"/>
<rect x="272.20" y="246.35" width="25.00" height="25.00" fill="#c4576a"/>
<rect x="296.20" y="246.35" width="25.00" height="25.00" fill="#a63c42"/>
<rect x="320.20" y="246.35" width="25.00" height="25.00" fill="#c4576a"/>
<rect x="344.20" y="246.35" width="25.00" height="25.00" fill="#c4576a"/>
<rect x="368.20" y="246.85" width="24.50" height="24.50" fill="#a63c42"/>
<rect x="536.70" y="246.85" width="24.50" height="24.50" fill="#c4576a"/>
<rect x="560.20" y="246.35" width="25.00" height="25.00" fill="#a63c42"/>
<rect x="584.20" y="246.35" width="25.00" height="25.00" fill="#c4576a"/>
<rect x="608.20" y="246.35" width="25.00" height="25.00" fill="#c4576a"/>
<rect x="632.20" y="246.35" width="25.00" height="25.00" fill="#a63c42"/>
<rect x="656.20" y="246.85" width="24.50" height="24.50" fill="#a63c42"/>
<rect x="248.70" y="270.35" width="24.50" height="25.00" fill="#c4576a"/>
<rect x="272.20" y="270.35" width="25.00" height="25.00" fill="#c4576a"/>
<rect x="296.20" y="270.35" width="25.00" height="25.00" fill="#a63c42"/>
<rect x="320.20" y="270.35" width="25.00" height="25.00" fill="#c4576a"/>
<rect x="344.20" y="270.35" width="25.00" height="25.00" fill="#a63c42"/>
<rect x="368.20" y="270.35" width="24.50" height="25.00" fill="#a63c42"/>
<rect x="536.70" y="270.35" width="24.50" height="25.00" fill="#c4576a"/>
<rect x="560.20" y="270.35" width="25.00" height="25.00" fill="#c4576a"/>
<rect x="584.20" y="270.35" width="25.00" height="25.00" fill="#a63c42"/>
<rect x="608.20" y="270.35" width="25.00" height="25.00" fill="#c4576a"/>
<rect x="632.20" y="270.35" width="25.00" height="25.00" fill="#a63c42"/>
<rect x="656.20" y="270.35" width="24.50" height="25.00" fill="#a63c42"/>
<rect x="248.70" y="294.35" width="24.50" height="25.00" fill="#c4576a"/>
<rect x="272.20" y="294.35" width="25.00" height="25.00" fill="#c4576a"/>
<rect x="296.20" y="294.35" width="25.00" height="25.00" fill="#b8484f"/>
<rect x="320.20" y="294.35" width="25.00" height="25.00" fill="#b8484f"/>
<rect x="344.20" y="294.35" width="25.00" height="25.00" fill="#a63c42"/>
<rect x="368.20" y="294.35" width="24.50" height="24.50" fill="#a63c42"/>
<rect x="416.70" y="294.85" width="24.50" height="24.50" fill="#474871"/>
<rect x="440.20" y="294.85" width="24.50" height="24.50" fill="#23233b"/>
<rect x="488.70" y="294.85" width="24.50" height="24.50" fill="#474871"/>
<rect x="512.20" y="294.85" width="25.00" height="24.50" fill="#23233b"/>
<rect x="536.20" y="294.35" width="25.00" height="24.50" fill="#c4576a"/>
<rect x="560.20" y="294.35" width="25.00" height="25.00" fill="#c4576a"/>
<rect x="584.20" y="294.35" width="25.00" height="25.00" fill="#a63c42"/>
<rect x="608.20" y="294.35" width="25.00" height="25.00" fill="#b8484f"/>
<rect x="632.20" y="294.35" width="25.00" height="25.00" fill="#a63c42"/>
<rect x="656.20" y="294.35" width="24.50" height="25.00" fill="#a63c42"/>
<rect x="248.70" y="318.35" width="24.50" height="24.50" fill="#c4576a"/>
<rect x="272.20" y="318.35" width="25.00" height="24.50" fill="#c4576a"/>
<rect x="296.20" y="318.35" width="25.00" height="25.00" fill="#b8484f"/>
<rect x="320.20" y="318.35" width="25.00" height="25.00" fill="#b8484f"/>
<rect x="344.20" y="318.35" width="24.50" height="25.00" fill="#a63c42"/>
<rect x="416.70" y="318.35" width="24.50" height="25.00" fill="#474871"/>
<rect x="440.20" y="318.35" width="24.50" height="25.00" fill="#23233b"/>
<rect x="488.70" y="318.35" width="24.50" height="25.00" fill="#474871"/>
<rect x="512.20" y="318.35" width="24.50" height="25.00" fill="#23233b"/>
<rect x="560.70" y="318.35" width="24.50" height="25.00" fill="#c4576a"/>
<rect x="584.20" y="318.35" width="25.00" height="25.00" fill="#b8484f"/>
<rect x="608.20" y="318.35" width="25.00" height="25.00" fill="#b8484f"/>
<rect x="632.20" y="318.35" width="25.00" height="25.00" fill="#a63c42"/>
<rect x="656.20" y="318.35" width="24.50" height="24.50" fill="#a63c42"/>
<rect x="296.70" y="342.35" width="24.50" height="24.50" fill="#c4576a"/>
<rect x="320.20" y="342.35" width="25.00" height="25.00" fill="#b8484f"/>
<rect x="344.20" y="342.35" width="24.50" height="25.00" fill="#a63c42"/>
<rect x="392.70" y="342.85" width="24.50" height="24.50" fill="#d3697f"/>
<rect x="416.20" y="342.35" width="25.00" height="25.00" fill="#474871"/>
<rect x="440.20" y="342.35" width="25.00" height="25.00" fill="#23233b"/>
<rect x="464.20" y="342.85" width="25.00" height="24.50" fill="#d3697f"/>
<rect x="488.20" y="342.35" width="25.00" height="25.00" fill="#474871"/>
<rect x="512.20" y="342.35" width="24.50" height="25.00" fill="#23233b"/>
<rect x="560.70" y="342.35" width="24.50" height="25.00" fill="#c4576a"/>
<rect x="584.20" y="342.35" width="25.00" height="25.00" fill="#c4576a"/>
<rect x="608.20" y="342.35" width="25.00" height="24.50" fill="#a63c42"/>
<rect x="632.20" y="342.35" width="24.50" height="24.50" fill="#a63c42"/>
<rect x="320.70" y="366.35" width="24.50" height="25.00" fill="#c4576a"/>
<rect x="344.20" y="366.35" width="25.00" height="25.00" fill="#a63c42"/>
<rect x="368.20" y="366.85" width="25.00" height="24.50" fill="#d3697f"/>
<rect x="392.20" y="366.35" width="25.00" height="25.00" fill="#d3697f"/>
<rect x="416.20" y="366.35" width="25.00" height="25.00" fill="#23233b"/>
<rect x="440.20" y="366.35" width="25.00" height="25.00" fill="#23233b"/>
<rect x="464.20" y="366.35" width="25.00" height="25.00" fill="#d3697f"/>
<rect x="488.20" y="366.35" width="25.00" height="25.00" fill="#23233b"/>
<rect x="512.20" y="366.35" width="25.00" height="25.00" fill="#23233b"/>
<rect x="536.20" y="366.85" width="25.00" height="24.50" fill="#c4576a"/>
<rect x="560.20" y="366.35" width="25.00" height="25.00" fill="#c4576a"/>
<rect x="584.20" y="366.35" width="24.50" height="25.00" fill="#a63c42"/>
<rect x="320.70" y="390.35" width="24.50" height="25.00" fill="#b8484f"/>
<rect x="344.20" y="390.35" width="25.00" height="25.00" fill="#a63c42"/>
<rect x="368.20" y="390.35" width="25.00" height="25.00" fill="#d3697f"/>
<rect x="392.20" y="390.35" width="25.00" height="25.00" fill="#cd6067"/>
<rect x="416.20" y="390.35" width="25.00" height="25.00" fill="#cd6067"/>
<rect x="440.20" y="390.35" width="25.00" height="25.00" fill="#cd6067"/>
<rect x="464.20" y="390.35" width="25.00" height="25.00" fill="#cd6067"/>
<rect x="488.20" y="390.35" width="25.00" height="25.00" fill="#cd6067"/>
<rect x="512.20" y="390.35" width="25.00" height="25.00" fill="#d3697f"/>
<rect x="536.20" y="390.35" width="25.00" height="25.00" fill="#c4576a"/>
<rect x="560.20" y="390.35" width="25.00" height="25.00" fill="#a63c42"/>
<rect x="584.20" y="390.35" width="24.50" height="25.00" fill="#d3697f"/>
<rect x="320.70" y="414.35" width="24.50" height="25.00" fill="#d3697f"/>
<rect x="344.20" y="414.35" width="25.00" height="25.00" fill="#d3697f"/>
<rect x="368.20" y="414.35" width="25.00" height="25.00" fill="#cd6067"/>
<rect x="392.20" y="414.35" width="25.00" height="25.00" fill="#cd6067"/>
<rect x="416.20" y="414.35" width="25.00" height="25.00" fill="#cd6067"/>
<rect x="440.20" y="414.35" width="25.00" height="25.00" fill="#b04e50"/>
<rect x="464.20" y="414.35" width="25.00" height="25.00" fill="#b04e50"/>
<rect x="488.20" y="414.35" width="25.00" height="25.00" fill="#b04e50"/>
<rect x="512.20" y="414.35" width="25.00" height="25.00" fill="#cd6067"/>
<rect x="536.20" y="414.35" width="25.00" height="25.00" fill="#cd6067"/>
<rect x="560.20" y="414.35" width="25.00" height="25.00" fill="#d3697f"/>
<rect x="584.20" y="414.35" width="24.50" height="25.00" fill="#d3697f"/>
<rect x="296.70" y="438.85" width="24.50" height="24.50" fill="#c4576a"/>
<rect x="320.20" y="438.35" width="25.00" height="25.00" fill="#c4576a"/>
<rect x="344.20" y="438.35" width="25.00" height="25.00" fill="#c05354"/>
<rect x="368.20" y="438.35" width="25.00" height="25.00" fill="#c05354"/>
<rect x="392.20" y="438.35" width="25.00" height="25.00" fill="#cd6067"/>
<rect x="416.20" y="438.35" width="25.00" height="25.00" fill="#b04e50"/>
<rect x="440.20" y="438.35" width="25.00" height="25.00" fill="#cd6067"/>
<rect x="464.20" y="438.35" width="25.00" height="25.00" fill="#cd6067"/>
<rect x="488.20" y="438.35" width="25.00" height="25.00" fill="#cd6067"/>
<rect x="512.20" y="438.35" width="25.00" height="25.00" fill="#b04e50"/>
<rect x="536.20" y="438.35" width="25.00" height="25.00" fill="#cd6067"/>
<rect x="560.20" y="438.35" width="25.00" height="25.00" fill="#bd5353"/>
<rect x="584.20" y="438.35" width="25.00" height="25.00" fill="#bd5353"/>
<rect x="608.20" y="438.85" width="24.50" height="24.50" fill="#b8484f"/>
<rect x="296.70" y="462.35" width="24.50" height="25.00" fill="#c4576a"/>
<rect x="320.20" y="462.35" width="25.00" height="25.00" fill="#b8484f"/>
<rect x="344.20" y="462.35" width="25.00" height="25.00" fill="#c4576a"/>
<rect x="368.20" y="462.35" width="25.00" height="25.00" fill="#c4576a"/>
<rect x="392.20" y="462.35" width="25.00" height="24.50" fill="#c05354"/>
<rect x="416.20" y="462.35" width="25.00" height="25.00" fill="#cd6067"/>
<rect x="440.20" y="462.35" width="25.00" height="25.00" fill="#cd6067"/>
<rect x="464.20" y="462.35" width="25.00" height="25.00" fill="#cd6067"/>
<rect x="488.20" y="462.35" width="25.00" height="25.00" fill="#cd6067"/>
<rect x="512.20" y="462.35" width="25.00" height="25.00" fill="#cd6067"/>
<rect x="536.20" y="462.35" width="25.00" height="25.00" fill="#c05354"/>
<rect x="560.20" y="462.35" width="25.00" height="25.00" fill="#a63c42"/>
<rect x="584.20" y="462.35" width="25.00" height="25.00" fill="#b8484f"/>
<rect x="608.20" y="462.35" width="24.50" height="25.00" fill="#b8484f"/>
<rect x="272.70" y="486.85" width="24.50" height="24.50" fill="#c4576a"/>
<rect x="296.20" y="486.35" width="25.00" height="24.50" fill="#b8484f"/>
<rect x="320.20" y="486.35" width="25.00" height="25.00" fill="#c4576a"/>
<rect x="344.20" y="486.35" width="25.00" height="25.00" fill="#b8484f"/>
<rect x="368.20" y="486.35" width="24.50" height="24.50" fill="#b8484f"/>
<rect x="416.70" y="486.35" width="24.50" height="24.50" fill="#c3525a"/>
<rect x="440.20" y="486.35" width="25.00" height="24.50" fill="#c3525a"/>
<rect x="464.20" y="486.35" width="25.00" height="24.50" fill="#c3525a"/>
<rect x="488.20" y="486.35" width="25.00" height="24.50" fill="#c3525a"/>
<rect x="512.20" y="486.35" width="25.00" height="24.50" fill="#bc4a56"/>
<rect x="536.20" y="486.35" width="25.00" height="25.00" fill="#bc4a56"/>
<rect x="560.20" y="486.35" width="25.00" height="25.00" fill="#bc4a56"/>
<rect x="584.20" y="486.35" width="25.00" height="25.00" fill="#a63c42"/>
<rect x="608.20" y="486.35" width="24.50" height="25.00" fill="#a63c42"/>
<rect x="272.70" y="510.35" width="24.00" height="24.50" fill="#b8484f"/>
<rect x="320.70" y="510.35" width="24.50" height="24.50" fill="#b8484f"/>
<rect x="344.20" y="510.35" width="24.50" height="24.50" fill="#b8484f"/>
<rect x="536.70" y="510.35" width="24.50" height="24.50" fill="#a63c42"/>
<rect x="560.20" y="510.35" width="25.00" height="24.50" fill="#a63c42"/>
<rect x="584.20" y="510.35" width="25.00" height="24.50" fill="#a63c42"/>
<rect x="608.20" y="510.35" width="24.50" height="24.50" fill="#a63c42"/>
<g fill="none" stroke-width="1.1">
<path d="M248.29999999999998 198.5H680.7M680.7 198.5V534.7M248.29999999999998 534.7H680.7M248.5 198.5V534.7" stroke="#16160c" opacity="0.6"/>
<path d="M248.29999999999998 198.5H680.7M680.7 198.5V534.7M248.29999999999998 534.7H680.7M248.5 198.5V534.7" stroke="#e8e58c" stroke-dasharray="2.25 2.25" opacity="0.75"/>
</g>
<rect x="14" y="132" width="316.5" height="349.8" rx="8" fill="#000000" opacity="0.5" filter="url(#sh)"/>
<rect x="11.5" y="121.5" width="321.5" height="352.8" rx="5.5" fill="#2a2a2a"/>
<g clip-path="url(#dlgclip)">
<rect x="12.00" y="122.00" width="320.50" height="351.80" fill="#3a3a3a"/>
<rect x="12.00" y="122.00" width="320.50" height="16.90" fill="#e3e3e3"/>
<rect x="12.00" y="138.50" width="320.50" height="0.70" fill="#b8b8b8"/>
</g>
<circle cx="20.5" cy="130.8" r="3.55" fill="#ee6a5f" stroke="#d5554a" stroke-width="0.5"/>
<circle cx="33.2" cy="130.8" r="3.55" fill="#f5be4f" stroke="#d9a23c" stroke-width="0.5"/>
<circle cx="45.5" cy="130.8" r="3.55" fill="#61c554" stroke="#4eaa41" stroke-width="0.5"/>
<text x="127.00" y="134.00" font-size="9.4" fill="#4b4b4b" font-weight="700" textLength="90.00" lengthAdjust="spacingAndGlyphs">Set Image Canvas Size</text>
<g fill="none" stroke="#e6e6e6" stroke-width="1">
<path d="M19.4 146.4H26.6M24.8 144.6L26.8 146.4L24.8 148.2"/>
<path d="M15.2 149.4V157.2M13.4 155.4L15.2 157.4L17 155.4"/>
</g>
<rect x="18.40" y="149.00" width="9.00" height="8.80" fill="#e4e4e4"/>
<rect x="19.60" y="150.20" width="6.60" height="5.20" fill="#5a5a5a"/>
<text x="32.25" y="149.30" font-size="9.4" fill="#ffffff" font-weight="700" textLength="83.00" lengthAdjust="spacingAndGlyphs">Set Image Canvas Size</text>
<text x="32.00" y="157.70" font-size="6.6" fill="#c4c4c4" textLength="46.00" lengthAdjust="spacingAndGlyphs">crab-18x18.xcf-2</text>
<rect x="309.60" y="141.20" width="20.20" height="20.60" fill="#2c2c2c"/>
<rect x="310.00" y="141.20" width="19.50" height="20.00" fill="url(#chks)"/>
<rect x="312.26" y="144.40" width="1.33" height="1.33" fill="#c4576a"/>
<rect x="313.09" y="144.40" width="1.33" height="1.33" fill="#c4576a"/>
<rect x="325.22" y="144.40" width="1.33" height="1.33" fill="#c4576a"/>
<rect x="326.05" y="144.40" width="1.33" height="1.33" fill="#c4576a"/>
<rect x="311.18" y="145.48" width="1.33" height="1.33" fill="#c4576a"/>
<rect x="312.01" y="145.23" width="1.58" height="1.58" fill="#c4576a"/>
<rect x="313.09" y="145.23" width="1.58" height="1.58" fill="#a63c42"/>
<rect x="314.17" y="145.48" width="1.33" height="1.33" fill="#c4576a"/>
<rect x="324.14" y="145.48" width="1.33" height="1.33" fill="#c4576a"/>
<rect x="324.97" y="145.23" width="1.58" height="1.58" fill="#c4576a"/>
<rect x="326.05" y="145.23" width="1.58" height="1.58" fill="#c4576a"/>
<rect x="327.13" y="145.48" width="1.33" height="1.33" fill="#a63c42"/>
<rect x="310.10" y="146.56" width="1.33" height="1.33" fill="#c4576a"/>
<rect x="310.93" y="146.31" width="1.58" height="1.58" fill="#c4576a"/>
<rect x="312.01" y="146.31" width="1.58" height="1.58" fill="#a63c42"/>
<rect x="313.09" y="146.31" width="1.58" height="1.58" fill="#c4576a"/>
<rect x="314.17" y="146.31" width="1.58" height="1.58" fill="#c4576a"/>
<rect x="315.25" y="146.56" width="1.33" height="1.33" fill="#a63c42"/>
<rect x="323.06" y="146.56" width="1.33" height="1.33" fill="#c4576a"/>
<rect x="323.89" y="146.31" width="1.58" height="1.58" fill="#a63c42"/>
<rect x="324.97" y="146.31" width="1.58" height="1.58" fill="#c4576a"/>
<rect x="326.05" y="146.31" width="1.58" height="1.58" fill="#c4576a"/>
<rect x="327.13" y="146.31" width="1.58" height="1.58" fill="#a63c42"/>
<rect x="328.21" y="146.56" width="1.33" height="1.33" fill="#a63c42"/>
<rect x="310.10" y="147.39" width="1.33" height="1.58" fill="#c4576a"/>
<rect x="310.93" y="147.39" width="1.58" height="1.58" fill="#c4576a"/>
<rect x="312.01" y="147.39" width="1.58" height="1.58" fill="#a63c42"/>
<rect x="313.09" y="147.39" width="1.58" height="1.58" fill="#c4576a"/>
<rect x="314.17" y="147.39" width="1.58" height="1.58" fill="#a63c42"/>
<rect x="315.25" y="147.39" width="1.33" height="1.58" fill="#a63c42"/>
<rect x="323.06" y="147.39" width="1.33" height="1.58" fill="#c4576a"/>
<rect x="323.89" y="147.39" width="1.58" height="1.58" fill="#c4576a"/>
<rect x="324.97" y="147.39" width="1.58" height="1.58" fill="#a63c42"/>
<rect x="326.05" y="147.39" width="1.58" height="1.58" fill="#c4576a"/>
<rect x="327.13" y="147.39" width="1.58" height="1.58" fill="#a63c42"/>
<rect x="328.21" y="147.39" width="1.33" height="1.58" fill="#a63c42"/>
<rect x="310.10" y="148.47" width="1.33" height="1.58" fill="#c4576a"/>
<rect x="310.93" y="148.47" width="1.58" height="1.58" fill="#c4576a"/>
<rect x="312.01" y="148.47" width="1.58" height="1.58" fill="#b8484f"/>
<rect x="313.09" y="148.47" width="1.58" height="1.58" fill="#b8484f"/>
<rect x="314.17" y="148.47" width="1.58" height="1.58" fill="#a63c42"/>
<rect x="315.25" y="148.47" width="1.33" height="1.33" fill="#a63c42"/>
<rect x="317.66" y="148.72" width="1.33" height="1.33" fill="#474871"/>
<rect x="318.49" y="148.72" width="1.33" height="1.33" fill="#23233b"/>
<rect x="320.90" y="148.72" width="1.33" height="1.33" fill="#474871"/>
<rect x="321.73" y="148.72" width="1.58" height="1.33" fill="#23233b"/>
<rect x="322.81" y="148.47" width="1.58" height="1.33" fill="#c4576a"/>
<rect x="323.89" y="148.47" width="1.58" height="1.58" fill="#c4576a"/>
<rect x="324.97" y="148.47" width="1.58" height="1.58" fill="#a63c42"/>
<rect x="326.05" y="148.47" width="1.58" height="1.58" fill="#b8484f"/>
<rect x="327.13" y="148.47" width="1.58" height="1.58" fill="#a63c42"/>
<rect x="328.21" y="148.47" width="1.33" height="1.58" fill="#a63c42"/>
<rect x="310.10" y="149.55" width="1.33" height="1.33" fill="#c4576a"/>
<rect x="310.93" y="149.55" width="1.58" height="1.33" fill="#c4576a"/>
<rect x="312.01" y="149.55" width="1.58" height="1.58" fill="#b8484f"/>
<rect x="313.09" y="149.55" width="1.58" height="1.58" fill="#b8484f"/>
<rect x="314.17" y="149.55" width="1.33" height="1.58" fill="#a63c42"/>
<rect x="317.66" y="149.55" width="1.33" height="1.58" fill="#474871"/>
<rect x="318.49" y="149.55" width="1.33" height="1.58" fill="#23233b"/>
<rect x="320.90" y="149.55" width="1.33" height="1.58" fill="#474871"/>
<rect x="321.73" y="149.55" width="1.33" height="1.58" fill="#23233b"/>
<rect x="324.14" y="149.55" width="1.33" height="1.58" fill="#c4576a"/>
<rect x="324.97" y="149.55" width="1.58" height="1.58" fill="#b8484f"/>
<rect x="326.05" y="149.55" width="1.58" height="1.58" fill="#b8484f"/>
<rect x="327.13" y="149.55" width="1.58" height="1.58" fill="#a63c42"/>
<rect x="328.21" y="149.55" width="1.33" height="1.33" fill="#a63c42"/>
<rect x="312.26" y="150.63" width="1.33" height="1.33" fill="#c4576a"/>
<rect x="313.09" y="150.63" width="1.58" height="1.58" fill="#b8484f"/>
<rect x="314.17" y="150.63" width="1.33" height="1.58" fill="#a63c42"/>
<rect x="316.58" y="150.88" width="1.33" height="1.33" fill="#d3697f"/>
<rect x="317.41" y="150.63" width="1.58" height="1.58" fill="#474871"/>
<rect x="318.49" y="150.63" width="1.58" height="1.58" fill="#23233b"/>
<rect x="319.57" y="150.88" width="1.58" height="1.33" fill="#d3697f"/>
<rect x="320.65" y="150.63" width="1.58" height="1.58" fill="#474871"/>
<rect x="321.73" y="150.63" width="1.33" height="1.58" fill="#23233b"/>
<rect x="324.14" y="150.63" width="1.33" height="1.58" fill="#c4576a"/>
<rect x="324.97" y="150.63" width="1.58" height="1.58" fill="#c4576a"/>
<rect x="326.05" y="150.63" width="1.58" height="1.33" fill="#a63c42"/>
<rect x="327.13" y="150.63" width="1.33" height="1.33" fill="#a63c42"/>
<rect x="313.34" y="151.71" width="1.33" height="1.58" fill="#c4576a"/>
<rect x="314.17" y="151.71" width="1.58" height="1.58" fill="#a63c42"/>
<rect x="315.25" y="151.96" width="1.58" height="1.33" fill="#d3697f"/>
<rect x="316.33" y="151.71" width="1.58" height="1.58" fill="#d3697f"/>
<rect x="317.41" y="151.71" width="1.58" height="1.58" fill="#23233b"/>
<rect x="318.49" y="151.71" width="1.58" height="1.58" fill="#23233b"/>
<rect x="319.57" y="151.71" width="1.58" height="1.58" fill="#d3697f"/>
<rect x="320.65" y="151.71" width="1.58" height="1.58" fill="#23233b"/>
<rect x="321.73" y="151.71" width="1.58" height="1.58" fill="#23233b"/>
<rect x="322.81" y="151.96" width="1.58" height="1.33" fill="#c4576a"/>
<rect x="323.89" y="151.71" width="1.58" height="1.58" fill="#c4576a"/>
<rect x="324.97" y="151.71" width="1.33" height="1.58" fill="#a63c42"/>
<rect x="313.34" y="152.79" width="1.33" height="1.58" fill="#b8484f"/>
<rect x="314.17" y="152.79" width="1.58" height="1.58" fill="#a63c42"/>
<rect x="315.25" y="152.79" width="1.58" height="1.58" fill="#d3697f"/>
<rect x="316.33" y="152.79" width="1.58" height="1.58" fill="#cd6067"/>
<rect x="317.41" y="152.79" width="1.58" height="1.58" fill="#cd6067"/>
<rect x="318.49" y="152.79" width="1.58" height="1.58" fill="#cd6067"/>
<rect x="319.57" y="152.79" width="1.58" height="1.58" fill="#cd6067"/>
<rect x="320.65" y="152.79" width="1.58" height="1.58" fill="#cd6067"/>
<rect x="321.73" y="152.79" width="1.58" height="1.58" fill="#d3697f"/>
<rect x="322.81" y="152.79" width="1.58" height="1.58" fill="#c4576a"/>
<rect x="323.89" y="152.79" width="1.58" height="1.58" fill="#a63c42"/>
<rect x="324.97" y="152.79" width="1.33" height="1.58" fill="#d3697f"/>
<rect x="313.34" y="153.87" width="1.33" height="1.58" fill="#d3697f"/>
<rect x="314.17" y="153.87" width="1.58" height="1.58" fill="#d3697f"/>
<rect x="315.25" y="153.87" width="1.58" height="1.58" fill="#cd6067"/>
<rect x="316.33" y="153.87" width="1.58" height="1.58" fill="#cd6067"/>
<rect x="317.41" y="153.87" width="1.58" height="1.58" fill="#cd6067"/>
<rect x="318.49" y="153.87" width="1.58" height="1.58" fill="#b04e50"/>
<rect x="319.57" y="153.87" width="1.58" height="1.58" fill="#b04e50"/>
<rect x="320.65" y="153.87" width="1.58" height="1.58" fill="#b04e50"/>
<rect x="321.73" y="153.87" width="1.58" height="1.58" fill="#cd6067"/>
<rect x="322.81" y="153.87" width="1.58" height="1.58" fill="#cd6067"/>
<rect x="323.89" y="153.87" width="1.58" height="1.58" fill="#d3697f"/>
<rect x="324.97" y="153.87" width="1.33" height="1.58" fill="#d3697f"/>
<rect x="312.26" y="155.20" width="1.33" height="1.33" fill="#c4576a"/>
<rect x="313.09" y="154.95" width="1.58" height="1.58" fill="#c4576a"/>
<rect x="314.17" y="154.95" width="1.58" height="1.58" fill="#c05354"/>
<rect x="315.25" y="154.95" width="1.58" height="1.58" fill="#c05354"/>
<rect x="316.33" y="154.95" width="1.58" height="1.58" fill="#cd6067"/>
<rect x="317.41" y="154.95" width="1.58" height="1.58" fill="#b04e50"/>
<rect x="318.49" y="154.95" width="1.58" height="1.58" fill="#cd6067"/>
<rect x="319.57" y="154.95" width="1.58" height="1.58" fill="#cd6067"/>
<rect x="320.65" y="154.95" width="1.58" height="1.58" fill="#cd6067"/>
<rect x="321.73" y="154.95" width="1.58" height="1.58" fill="#b04e50"/>
<rect x="322.81" y="154.95" width="1.58" height="1.58" fill="#cd6067"/>
<rect x="323.89" y="154.95" width="1.58" height="1.58" fill="#bd5353"/>
<rect x="324.97" y="154.95" width="1.58" height="1.58" fill="#bd5353"/>
<rect x="326.05" y="155.20" width="1.33" height="1.33" fill="#b8484f"/>
<rect x="312.26" y="156.03" width="1.33" height="1.58" fill="#c4576a"/>
<rect x="313.09" y="156.03" width="1.58" height="1.58" fill="#b8484f"/>
<rect x="314.17" y="156.03" width="1.58" height="1.58" fill="#c4576a"/>
<rect x="315.25" y="156.03" width="1.58" height="1.58" fill="#c4576a"/>
<rect x="316.33" y="156.03" width="1.58" height="1.33" fill="#c05354"/>
<rect x="317.41" y="156.03" width="1.58" height="1.58" fill="#cd6067"/>
<rect x="318.49" y="156.03" width="1.58" height="1.58" fill="#cd6067"/>
<rect x="319.57" y="156.03" width="1.58" height="1.58" fill="#cd6067"/>
<rect x="320.65" y="156.03" width="1.58" height="1.58" fill="#cd6067"/>
<rect x="321.73" y="156.03" width="1.58" height="1.58" fill="#cd6067"/>
<rect x="322.81" y="156.03" width="1.58" height="1.58" fill="#c05354"/>
<rect x="323.89" y="156.03" width="1.58" height="1.58" fill="#a63c42"/>
<rect x="324.97" y="156.03" width="1.58" height="1.58" fill="#b8484f"/>
<rect x="326.05" y="156.03" width="1.33" height="1.58" fill="#b8484f"/>
<rect x="311.18" y="157.36" width="1.33" height="1.33" fill="#c4576a"/>
<rect x="312.01" y="157.11" width="1.58" height="1.33" fill="#b8484f"/>
<rect x="313.09" y="157.11" width="1.58" height="1.58" fill="#c4576a"/>
<rect x="314.17" y="157.11" width="1.58" height="1.58" fill="#b8484f"/>
<rect x="315.25" y="157.11" width="1.33" height="1.33" fill="#b8484f"/>
<rect x="317.66" y="157.11" width="1.33" height="1.33" fill="#c3525a"/>
<rect x="318.49" y="157.11" width="1.58" height="1.33" fill="#c3525a"/>
<rect x="319.57" y="157.11" width="1.58" height="1.33" fill="#c3525a"/>
<rect x="320.65" y="157.11" width="1.58" height="1.33" fill="#c3525a"/>
<rect x="321.73" y="157.11" width="1.58" height="1.33" fill="#bc4a56"/>
<rect x="322.81" y="157.11" width="1.58" height="1.58" fill="#bc4a56"/>
<rect x="323.89" y="157.11" width="1.58" height="1.58" fill="#bc4a56"/>
<rect x="324.97" y="157.11" width="1.58" height="1.58" fill="#a63c42"/>
<rect x="326.05" y="157.11" width="1.33" height="1.58" fill="#a63c42"/>
<rect x="311.18" y="158.19" width="1.08" height="1.33" fill="#b8484f"/>
<rect x="313.34" y="158.19" width="1.33" height="1.33" fill="#b8484f"/>
<rect x="314.17" y="158.19" width="1.33" height="1.33" fill="#b8484f"/>
<rect x="323.06" y="158.19" width="1.33" height="1.33" fill="#a63c42"/>
<rect x="323.89" y="158.19" width="1.58" height="1.33" fill="#a63c42"/>
<rect x="324.97" y="158.19" width="1.58" height="1.33" fill="#a63c42"/>
<rect x="326.05" y="158.19" width="1.33" height="1.33" fill="#a63c42"/>
<text x="20.00" y="184.00" font-size="8.2" fill="#e2e2e2" textLength="29.00" lengthAdjust="spacingAndGlyphs">Template:</text>
<rect x="53.00" y="171.20" width="245.80" height="20.20" fill="#282828" rx="3"/>
<path d="M283.6 178.8H291.2L287.4 183.4Z" fill="#f2f2f2"/>
<g fill="none" stroke="#f0f0f0" stroke-width="1.25"><path d="M312.3 178.9A3.4 3.4 0 1 1 313.9 184.6"/></g><path d="M309.4 180.9L313.4 178.2V183Z" fill="#f0f0f0"/><circle cx="311.6" cy="184.7" r="1.25" fill="#f0f0f0"/>
<text x="20.00" y="207.00" font-size="8.6" fill="#f4f4f4" font-weight="700" textLength="37.00" lengthAdjust="spacingAndGlyphs">Canvas Size</text>
<text x="24.50" y="225.90" font-size="8.2" fill="#e2e2e2" textLength="20.50" lengthAdjust="spacingAndGlyphs">Width:</text>
<rect x="46.60" y="212.40" width="90.60" height="20.80" fill="#2a2a2a" rx="2.5"/>
<rect x="47.00" y="212.80" width="46.00" height="20.00" fill="#282828" rx="2"/>
<rect x="93.60" y="213.00" width="20.80" height="19.60" fill="#383838"/>
<rect x="115.00" y="213.00" width="21.20" height="19.60" fill="#383838" rx="1.5"/>
<rect x="99.60" y="222.10" width="8.60" height="1.70" fill="#f0f0f0"/>
<rect x="121.00" y="222.10" width="9.20" height="1.70" fill="#f0f0f0"/>
<rect x="124.75" y="218.30" width="1.70" height="9.30" fill="#f0f0f0"/>
<text x="53.00" y="225.90" font-size="8.2" fill="#f0f0f0" textLength="11.60" lengthAdjust="spacingAndGlyphs">128</text>
<rect x="65.00" y="219.00" width="0.80" height="8.60" fill="#f0f0f0"/>
<text x="24.50" y="247.00" font-size="8.2" fill="#e2e2e2" textLength="22.00" lengthAdjust="spacingAndGlyphs">Height:</text>
<rect x="46.60" y="233.40" width="90.60" height="20.80" fill="#2a2a2a" rx="2.5"/>
<rect x="47.00" y="233.80" width="46.00" height="20.00" fill="#282828" rx="2"/>
<rect x="93.60" y="234.00" width="20.80" height="19.60" fill="#383838"/>
<rect x="115.00" y="234.00" width="21.20" height="19.60" fill="#383838" rx="1.5"/>
<rect x="99.60" y="243.10" width="8.60" height="1.70" fill="#f0f0f0"/>
<rect x="121.00" y="243.10" width="9.20" height="1.70" fill="#f0f0f0"/>
<rect x="124.75" y="239.30" width="1.70" height="9.30" fill="#f0f0f0"/>
<text x="53.00" y="247.00" font-size="8.2" fill="#f0f0f0" textLength="12.20" lengthAdjust="spacingAndGlyphs">128</text>
<g fill="none" stroke="#e8e8e8" stroke-width="1.2"><path d="M145 217.9H148.6V222.3"/><path d="M145 249H148.6V244.4"/>
<path d="M146 232.6V231.6A2 2 0 0 1 150 231.6V232.6M146 235.6V236.6A2 2 0 0 0 150 236.6V235.6M148 230.6V237.6M145 233.3H151M145 234.9H151" stroke-width="0.9"/></g>
<rect x="159.30" y="234.30" width="37.00" height="20.00" fill="#282828" rx="3"/>
<text x="166.80" y="246.80" font-size="8.2" fill="#f0f0f0" textLength="7.40" lengthAdjust="spacingAndGlyphs">px</text>
<path d="M181.4 241.2H188.8L185.1 245.8Z" fill="#f2f2f2"/>
<text x="47.00" y="260.80" font-size="7" fill="#d6d6d6" textLength="43.50" lengthAdjust="spacingAndGlyphs">128 × 128 pixels</text>
<text x="47.00" y="270.00" font-size="7" fill="#d6d6d6" textLength="17.00" lengthAdjust="spacingAndGlyphs">72 ppi</text>
<text x="20.00" y="281.80" font-size="8.6" fill="#f4f4f4" font-weight="700" textLength="20.00" lengthAdjust="spacingAndGlyphs">Offset</text>
<text x="24.50" y="301.30" font-size="8.2" fill="#e2e2e2" textLength="6.40" lengthAdjust="spacingAndGlyphs">X:</text>
<rect x="30.60" y="287.90" width="90.60" height="20.80" fill="#2a2a2a" rx="2.5"/>
<rect x="31.00" y="288.30" width="46.00" height="20.00" fill="#282828" rx="2"/>
<rect x="77.60" y="288.50" width="20.80" height="19.60" fill="#383838"/>
<rect x="99.00" y="288.50" width="21.20" height="19.60" fill="#383838" rx="1.5"/>
<rect x="83.60" y="297.60" width="8.60" height="1.70" fill="#6a6a6a"/>
<rect x="105.00" y="297.60" width="9.20" height="1.70" fill="#f0f0f0"/>
<rect x="108.75" y="293.80" width="1.70" height="9.30" fill="#f0f0f0"/>
<rect x="36.60" y="293.40" width="4.60" height="10.20" fill="#e2e2e2"/>
<text x="37.20" y="301.30" font-size="8.2" fill="#222222" textLength="3.60" lengthAdjust="spacingAndGlyphs">0</text>
<text x="24.50" y="322.50" font-size="8.2" fill="#e2e2e2" textLength="6.40" lengthAdjust="spacingAndGlyphs">Y:</text>
<rect x="30.60" y="309.10" width="90.60" height="20.80" fill="#2a2a2a" rx="2.5"/>
<rect x="31.00" y="309.50" width="46.00" height="20.00" fill="#282828" rx="2"/>
<rect x="77.60" y="309.70" width="20.80" height="19.60" fill="#383838"/>
<rect x="99.00" y="309.70" width="21.20" height="19.60" fill="#383838" rx="1.5"/>
<rect x="83.60" y="318.80" width="8.60" height="1.70" fill="#6a6a6a"/>
<rect x="105.00" y="318.80" width="9.20" height="1.70" fill="#f0f0f0"/>
<rect x="108.75" y="315.00" width="1.70" height="9.30" fill="#f0f0f0"/>
<text x="37.20" y="322.50" font-size="8.2" fill="#f0f0f0" textLength="4.20" lengthAdjust="spacingAndGlyphs">0</text>
<rect x="121.20" y="309.50" width="37.40" height="20.00" fill="#282828" rx="3"/>
<text x="128.60" y="322.30" font-size="8.2" fill="#f0f0f0" textLength="7.40" lengthAdjust="spacingAndGlyphs">px</text>
<path d="M143.4 316.8H150.8L147.1 321.4Z" fill="#f2f2f2"/>
<rect x="198.50" y="199.80" width="126.20" height="124.00" fill="#474747" rx="1"/>
<rect x="199.10" y="200.40" width="125.00" height="122.80" fill="#202020"/>
<rect x="199.80" y="201.00" width="123.60" height="121.60" fill="#2b2b2b"/>
<rect x="213.40" y="226.80" width="7.20" height="7.20" fill="#c4576a"/>
<rect x="219.60" y="226.80" width="7.20" height="7.20" fill="#c4576a"/>
<rect x="293.80" y="226.80" width="7.20" height="7.20" fill="#c4576a"/>
<rect x="300.00" y="226.80" width="7.20" height="7.20" fill="#c4576a"/>
<rect x="206.70" y="233.50" width="7.20" height="7.20" fill="#c4576a"/>
<rect x="212.90" y="233.00" width="7.70" height="7.70" fill="#c4576a"/>
<rect x="219.60" y="233.00" width="7.70" height="7.70" fill="#a63c42"/>
<rect x="226.30" y="233.50" width="7.20" height="7.20" fill="#c4576a"/>
<rect x="287.10" y="233.50" width="7.20" height="7.20" fill="#c4576a"/>
<rect x="293.30" y="233.00" width="7.70" height="7.70" fill="#c4576a"/>
<rect x="300.00" y="233.00" width="7.70" height="7.70" fill="#c4576a"/>
<rect x="306.70" y="233.50" width="7.20" height="7.20" fill="#a63c42"/>
<rect x="200.00" y="240.20" width="7.20" height="7.20" fill="#c4576a"/>
<rect x="206.20" y="239.70" width="7.70" height="7.70" fill="#c4576a"/>
<rect x="212.90" y="239.70" width="7.70" height="7.70" fill="#a63c42"/>
<rect x="219.60" y="239.70" width="7.70" height="7.70" fill="#c4576a"/>
<rect x="226.30" y="239.70" width="7.70" height="7.70" fill="#c4576a"/>
<rect x="233.00" y="240.20" width="7.20" height="7.20" fill="#a63c42"/>
<rect x="280.40" y="240.20" width="7.20" height="7.20" fill="#c4576a"/>
<rect x="286.60" y="239.70" width="7.70" height="7.70" fill="#a63c42"/>
<rect x="293.30" y="239.70" width="7.70" height="7.70" fill="#c4576a"/>
<rect x="300.00" y="239.70" width="7.70" height="7.70" fill="#c4576a"/>
<rect x="306.70" y="239.70" width="7.70" height="7.70" fill="#a63c42"/>
<rect x="313.40" y="240.20" width="7.20" height="7.20" fill="#a63c42"/>
<rect x="200.00" y="246.40" width="7.20" height="7.70" fill="#c4576a"/>
<rect x="206.20" y="246.40" width="7.70" height="7.70" fill="#c4576a"/>
<rect x="212.90" y="246.40" width="7.70" height="7.70" fill="#a63c42"/>
<rect x="219.60" y="246.40" width="7.70" height="7.70" fill="#c4576a"/>
<rect x="226.30" y="246.40" width="7.70" height="7.70" fill="#a63c42"/>
<rect x="233.00" y="246.40" width="7.20" height="7.70" fill="#a63c42"/>
<rect x="280.40" y="246.40" width="7.20" height="7.70" fill="#c4576a"/>
<rect x="286.60" y="246.40" width="7.70" height="7.70" fill="#c4576a"/>
<rect x="293.30" y="246.40" width="7.70" height="7.70" fill="#a63c42"/>
<rect x="300.00" y="246.40" width="7.70" height="7.70" fill="#c4576a"/>
<rect x="306.70" y="246.40" width="7.70" height="7.70" fill="#a63c42"/>
<rect x="313.40" y="246.40" width="7.20" height="7.70" fill="#a63c42"/>
<rect x="200.00" y="253.10" width="7.20" height="7.70" fill="#c4576a"/>
<rect x="206.20" y="253.10" width="7.70" height="7.70" fill="#c4576a"/>
<rect x="212.90" y="253.10" width="7.70" height="7.70" fill="#b8484f"/>
<rect x="219.60" y="253.10" width="7.70" height="7.70" fill="#b8484f"/>
<rect x="226.30" y="253.10" width="7.70" height="7.70" fill="#a63c42"/>
<rect x="233.00" y="253.10" width="7.20" height="7.20" fill="#a63c42"/>
<rect x="246.90" y="253.60" width="7.20" height="7.20" fill="#474871"/>
<rect x="253.10" y="253.60" width="7.20" height="7.20" fill="#23233b"/>
<rect x="267.00" y="253.60" width="7.20" height="7.20" fill="#474871"/>
<rect x="273.20" y="253.60" width="7.70" height="7.20" fill="#23233b"/>
<rect x="279.90" y="253.10" width="7.70" height="7.20" fill="#c4576a"/>
<rect x="286.60" y="253.10" width="7.70" height="7.70" fill="#c4576a"/>
<rect x="293.30" y="253.10" width="7.70" height="7.70" fill="#a63c42"/>
<rect x="300.00" y="253.10" width="7.70" height="7.70" fill="#b8484f"/>
<rect x="306.70" y="253.10" width="7.70" height="7.70" fill="#a63c42"/>
<rect x="313.40" y="253.10" width="7.20" height="7.70" fill="#a63c42"/>
<rect x="200.00" y="259.80" width="7.20" height="7.20" fill="#c4576a"/>
<rect x="206.20" y="259.80" width="7.70" height="7.20" fill="#c4576a"/>
<rect x="212.90" y="259.80" width="7.70" height="7.70" fill="#b8484f"/>
<rect x="219.60" y="259.80" width="7.70" height="7.70" fill="#b8484f"/>
<rect x="226.30" y="259.80" width="7.20" height="7.70" fill="#a63c42"/>
<rect x="246.90" y="259.80" width="7.20" height="7.70" fill="#474871"/>
<rect x="253.10" y="259.80" width="7.20" height="7.70" fill="#23233b"/>
<rect x="267.00" y="259.80" width="7.20" height="7.70" fill="#474871"/>
<rect x="273.20" y="259.80" width="7.20" height="7.70" fill="#23233b"/>
<rect x="287.10" y="259.80" width="7.20" height="7.70" fill="#c4576a"/>
<rect x="293.30" y="259.80" width="7.70" height="7.70" fill="#b8484f"/>
<rect x="300.00" y="259.80" width="7.70" height="7.70" fill="#b8484f"/>
<rect x="306.70" y="259.80" width="7.70" height="7.70" fill="#a63c42"/>
<rect x="313.40" y="259.80" width="7.20" height="7.20" fill="#a63c42"/>
<rect x="213.40" y="266.50" width="7.20" height="7.20" fill="#c4576a"/>
<rect x="219.60" y="266.50" width="7.70" height="7.70" fill="#b8484f"/>
<rect x="226.30" y="266.50" width="7.20" height="7.70" fill="#a63c42"/>
<rect x="240.20" y="267.00" width="7.20" height="7.20" fill="#d3697f"/>
<rect x="246.40" y="266.50" width="7.70" height="7.70" fill="#474871"/>
<rect x="253.10" y="266.50" width="7.70" height="7.70" fill="#23233b"/>
<rect x="259.80" y="267.00" width="7.70" height="7.20" fill="#d3697f"/>
<rect x="266.50" y="266.50" width="7.70" height="7.70" fill="#474871"/>
<rect x="273.20" y="266.50" width="7.20" height="7.70" fill="#23233b"/>
<rect x="287.10" y="266.50" width="7.20" height="7.70" fill="#c4576a"/>
<rect x="293.30" y="266.50" width="7.70" height="7.70" fill="#c4576a"/>
<rect x="300.00" y="266.50" width="7.70" height="7.20" fill="#a63c42"/>
<rect x="306.70" y="266.50" width="7.20" height="7.20" fill="#a63c42"/>
<rect x="220.10" y="273.20" width="7.20" height="7.70" fill="#c4576a"/>
<rect x="226.30" y="273.20" width="7.70" height="7.70" fill="#a63c42"/>
<rect x="233.00" y="273.70" width="7.70" height="7.20" fill="#d3697f"/>
<rect x="239.70" y="273.20" width="7.70" height="7.70" fill="#d3697f"/>
<rect x="246.40" y="273.20" width="7.70" height="7.70" fill="#23233b"/>
<rect x="253.10" y="273.20" width="7.70" height="7.70" fill="#23233b"/>
<rect x="259.80" y="273.20" width="7.70" height="7.70" fill="#d3697f"/>
<rect x="266.50" y="273.20" width="7.70" height="7.70" fill="#23233b"/>
<rect x="273.20" y="273.20" width="7.70" height="7.70" fill="#23233b"/>
<rect x="279.90" y="273.70" width="7.70" height="7.20" fill="#c4576a"/>
<rect x="286.60" y="273.20" width="7.70" height="7.70" fill="#c4576a"/>
<rect x="293.30" y="273.20" width="7.20" height="7.70" fill="#a63c42"/>
<rect x="220.10" y="279.90" width="7.20" height="7.70" fill="#b8484f"/>
<rect x="226.30" y="279.90" width="7.70" height="7.70" fill="#a63c42"/>
<rect x="233.00" y="279.90" width="7.70" height="7.70" fill="#d3697f"/>
<rect x="239.70" y="279.90" width="7.70" height="7.70" fill="#cd6067"/>
<rect x="246.40" y="279.90" width="7.70" height="7.70" fill="#cd6067"/>
<rect x="253.10" y="279.90" width="7.70" height="7.70" fill="#cd6067"/>
<rect x="259.80" y="279.90" width="7.70" height="7.70" fill="#cd6067"/>
<rect x="266.50" y="279.90" width="7.70" height="7.70" fill="#cd6067"/>
<rect x="273.20" y="279.90" width="7.70" height="7.70" fill="#d3697f"/>
<rect x="279.90" y="279.90" width="7.70" height="7.70" fill="#c4576a"/>
<rect x="286.60" y="279.90" width="7.70" height="7.70" fill="#a63c42"/>
<rect x="293.30" y="279.90" width="7.20" height="7.70" fill="#d3697f"/>
<rect x="220.10" y="286.60" width="7.20" height="7.70" fill="#d3697f"/>
<rect x="226.30" y="286.60" width="7.70" height="7.70" fill="#d3697f"/>
<rect x="233.00" y="286.60" width="7.70" height="7.70" fill="#cd6067"/>
<rect x="239.70" y="286.60" width="7.70" height="7.70" fill="#cd6067"/>
<rect x="246.40" y="286.60" width="7.70" height="7.70" fill="#cd6067"/>
<rect x="253.10" y="286.60" width="7.70" height="7.70" fill="#b04e50"/>
<rect x="259.80" y="286.60" width="7.70" height="7.70" fill="#b04e50"/>
<rect x="266.50" y="286.60" width="7.70" height="7.70" fill="#b04e50"/>
<rect x="273.20" y="286.60" width="7.70" height="7.70" fill="#cd6067"/>
<rect x="279.90" y="286.60" width="7.70" height="7.70" fill="#cd6067"/>
<rect x="286.60" y="286.60" width="7.70" height="7.70" fill="#d3697f"/>
<rect x="293.30" y="286.60" width="7.20" height="7.70" fill="#d3697f"/>
<rect x="213.40" y="293.80" width="7.20" height="7.20" fill="#c4576a"/>
<rect x="219.60" y="293.30" width="7.70" height="7.70" fill="#c4576a"/>
<rect x="226.30" y="293.30" width="7.70" height="7.70" fill="#c05354"/>
<rect x="233.00" y="293.30" width="7.70" height="7.70" fill="#c05354"/>
<rect x="239.70" y="293.30" width="7.70" height="7.70" fill="#cd6067"/>
<rect x="246.40" y="293.30" width="7.70" height="7.70" fill="#b04e50"/>
<rect x="253.10" y="293.30" width="7.70" height="7.70" fill="#cd6067"/>
<rect x="259.80" y="293.30" width="7.70" height="7.70" fill="#cd6067"/>
<rect x="266.50" y="293.30" width="7.70" height="7.70" fill="#cd6067"/>
<rect x="273.20" y="293.30" width="7.70" height="7.70" fill="#b04e50"/>
<rect x="279.90" y="293.30" width="7.70" height="7.70" fill="#cd6067"/>
<rect x="286.60" y="293.30" width="7.70" height="7.70" fill="#bd5353"/>
<rect x="293.30" y="293.30" width="7.70" height="7.70" fill="#bd5353"/>
<rect x="300.00" y="293.80" width="7.20" height="7.20" fill="#b8484f"/>
<rect x="213.40" y="300.00" width="7.20" height="7.70" fill="#c4576a"/>
<rect x="219.60" y="300.00" width="7.70" height="7.70" fill="#b8484f"/>
<rect x="226.30" y="300.00" width="7.70" height="7.70" fill="#c4576a"/>
<rect x="233.00" y="300.00" width="7.70" height="7.70" fill="#c4576a"/>
<rect x="239.70" y="300.00" width="7.70" height="7.20" fill="#c05354"/>
<rect x="246.40" y="300.00" width="7.70" height="7.70" fill="#cd6067"/>
<rect x="253.10" y="300.00" width="7.70" height="7.70" fill="#cd6067"/>
<rect x="259.80" y="300.00" width="7.70" height="7.70" fill="#cd6067"/>
<rect x="266.50" y="300.00" width="7.70" height="7.70" fill="#cd6067"/>
<rect x="273.20" y="300.00" width="7.70" height="7.70" fill="#cd6067"/>
<rect x="279.90" y="300.00" width="7.70" height="7.70" fill="#c05354"/>
<rect x="286.60" y="300.00" width="7.70" height="7.70" fill="#a63c42"/>
<rect x="293.30" y="300.00" width="7.70" height="7.70" fill="#b8484f"/>
<rect x="300.00" y="300.00" width="7.20" height="7.70" fill="#b8484f"/>
<rect x="206.70" y="307.20" width="7.20" height="7.20" fill="#c4576a"/>
<rect x="212.90" y="306.70" width="7.70" height="7.20" fill="#b8484f"/>
<rect x="219.60" y="306.70" width="7.70" height="7.70" fill="#c4576a"/>
<rect x="226.30" y="306.70" width="7.70" height="7.70" fill="#b8484f"/>
<rect x="233.00" y="306.70" width="7.20" height="7.20" fill="#b8484f"/>
<rect x="246.90" y="306.70" width="7.20" height="7.20" fill="#c3525a"/>
<rect x="253.10" y="306.70" width="7.70" height="7.20" fill="#c3525a"/>
<rect x="259.80" y="306.70" width="7.70" height="7.20" fill="#c3525a"/>
<rect x="266.50" y="306.70" width="7.70" height="7.20" fill="#c3525a"/>
<rect x="273.20" y="306.70" width="7.70" height="7.20" fill="#bc4a56"/>
<rect x="279.90" y="306.70" width="7.70" height="7.70" fill="#bc4a56"/>
<rect x="286.60" y="306.70" width="7.70" height="7.70" fill="#bc4a56"/>
<rect x="293.30" y="306.70" width="7.70" height="7.70" fill="#a63c42"/>
<rect x="300.00" y="306.70" width="7.20" height="7.70" fill="#a63c42"/>
<rect x="206.70" y="313.40" width="6.70" height="7.20" fill="#b8484f"/>
<rect x="220.10" y="313.40" width="7.20" height="7.20" fill="#b8484f"/>
<rect x="226.30" y="313.40" width="7.20" height="7.20" fill="#b8484f"/>
<rect x="280.40" y="313.40" width="7.20" height="7.20" fill="#a63c42"/>
<rect x="286.60" y="313.40" width="7.70" height="7.20" fill="#a63c42"/>
<rect x="293.30" y="313.40" width="7.70" height="7.20" fill="#a63c42"/>
<rect x="300.00" y="313.40" width="7.20" height="7.20" fill="#a63c42"/>
<rect x="198.20" y="328.00" width="126.80" height="20.00" fill="#2a2a2a" rx="3" stroke="#242424" stroke-width="0.6"/>
<text x="251.00" y="341.00" font-size="8.2" fill="#f0f0f0" textLength="20.50" lengthAdjust="spacingAndGlyphs">Center</text>
<text x="20.00" y="363.80" font-size="8.6" fill="#f4f4f4" font-weight="700" textLength="20.50" lengthAdjust="spacingAndGlyphs">Layers</text>
<text x="24.50" y="382.50" font-size="8.2" fill="#e2e2e2" textLength="41.50" lengthAdjust="spacingAndGlyphs">Resize layers:</text>
<rect x="70.20" y="369.50" width="254.80" height="20.50" fill="#282828" rx="3"/>
<text x="80.00" y="382.50" font-size="8.2" fill="#f0f0f0" textLength="16.20" lengthAdjust="spacingAndGlyphs">None</text>
<path d="M310.2 377.2H317.8L314 381.8Z" fill="#f2f2f2"/>
<text x="24.50" y="407.50" font-size="8.2" fill="#e2e2e2" textLength="23.00" lengthAdjust="spacingAndGlyphs">Fill with:</text>
<rect x="70.20" y="395.00" width="254.80" height="20.50" fill="#282828" rx="3"/>
<text x="80.00" y="407.50" font-size="8.2" fill="#f0f0f0" textLength="42.50" lengthAdjust="spacingAndGlyphs">Transparency</text>
<path d="M310.2 402.4H317.8L314 407Z" fill="#f2f2f2"/>
<rect x="27.50" y="421.20" width="8.60" height="8.80" fill="#282828" rx="1.2"/>
<text x="40.00" y="428.00" font-size="8.2" fill="#e2e2e2" textLength="52.00" lengthAdjust="spacingAndGlyphs">Resize text layers</text>
<rect x="19.50" y="447.00" width="52.50" height="20.40" fill="#2a2a2a" rx="3" stroke="#242424" stroke-width="0.6"/>
<text x="38.60" y="460.00" font-size="8.2" fill="#f2f2f2" textLength="14.40" lengthAdjust="spacingAndGlyphs">Help</text>
<rect x="158.80" y="447.00" width="52.40" height="20.40" fill="#2a2a2a" rx="3" stroke="#242424" stroke-width="0.6"/>
<text x="176.00" y="460.00" font-size="8.2" fill="#f2f2f2" textLength="18.00" lengthAdjust="spacingAndGlyphs">Reset</text>
<rect x="215.30" y="447.00" width="52.40" height="20.40" fill="#2a2a2a" rx="3" stroke="#242424" stroke-width="0.6"/>
<text x="231.00" y="460.00" font-size="8.2" fill="#f2f2f2" textLength="21.30" lengthAdjust="spacingAndGlyphs">Cancel</text>
<rect x="272.60" y="447.00" width="52.40" height="20.40" fill="#2a2a2a" rx="3" stroke="#a4a4a4" stroke-width="0.8"/>
<text x="288.60" y="460.00" font-size="8.2" fill="#f2f2f2" textLength="19.90" lengthAdjust="spacingAndGlyphs">Resize</text>
</svg>
</body></html>
